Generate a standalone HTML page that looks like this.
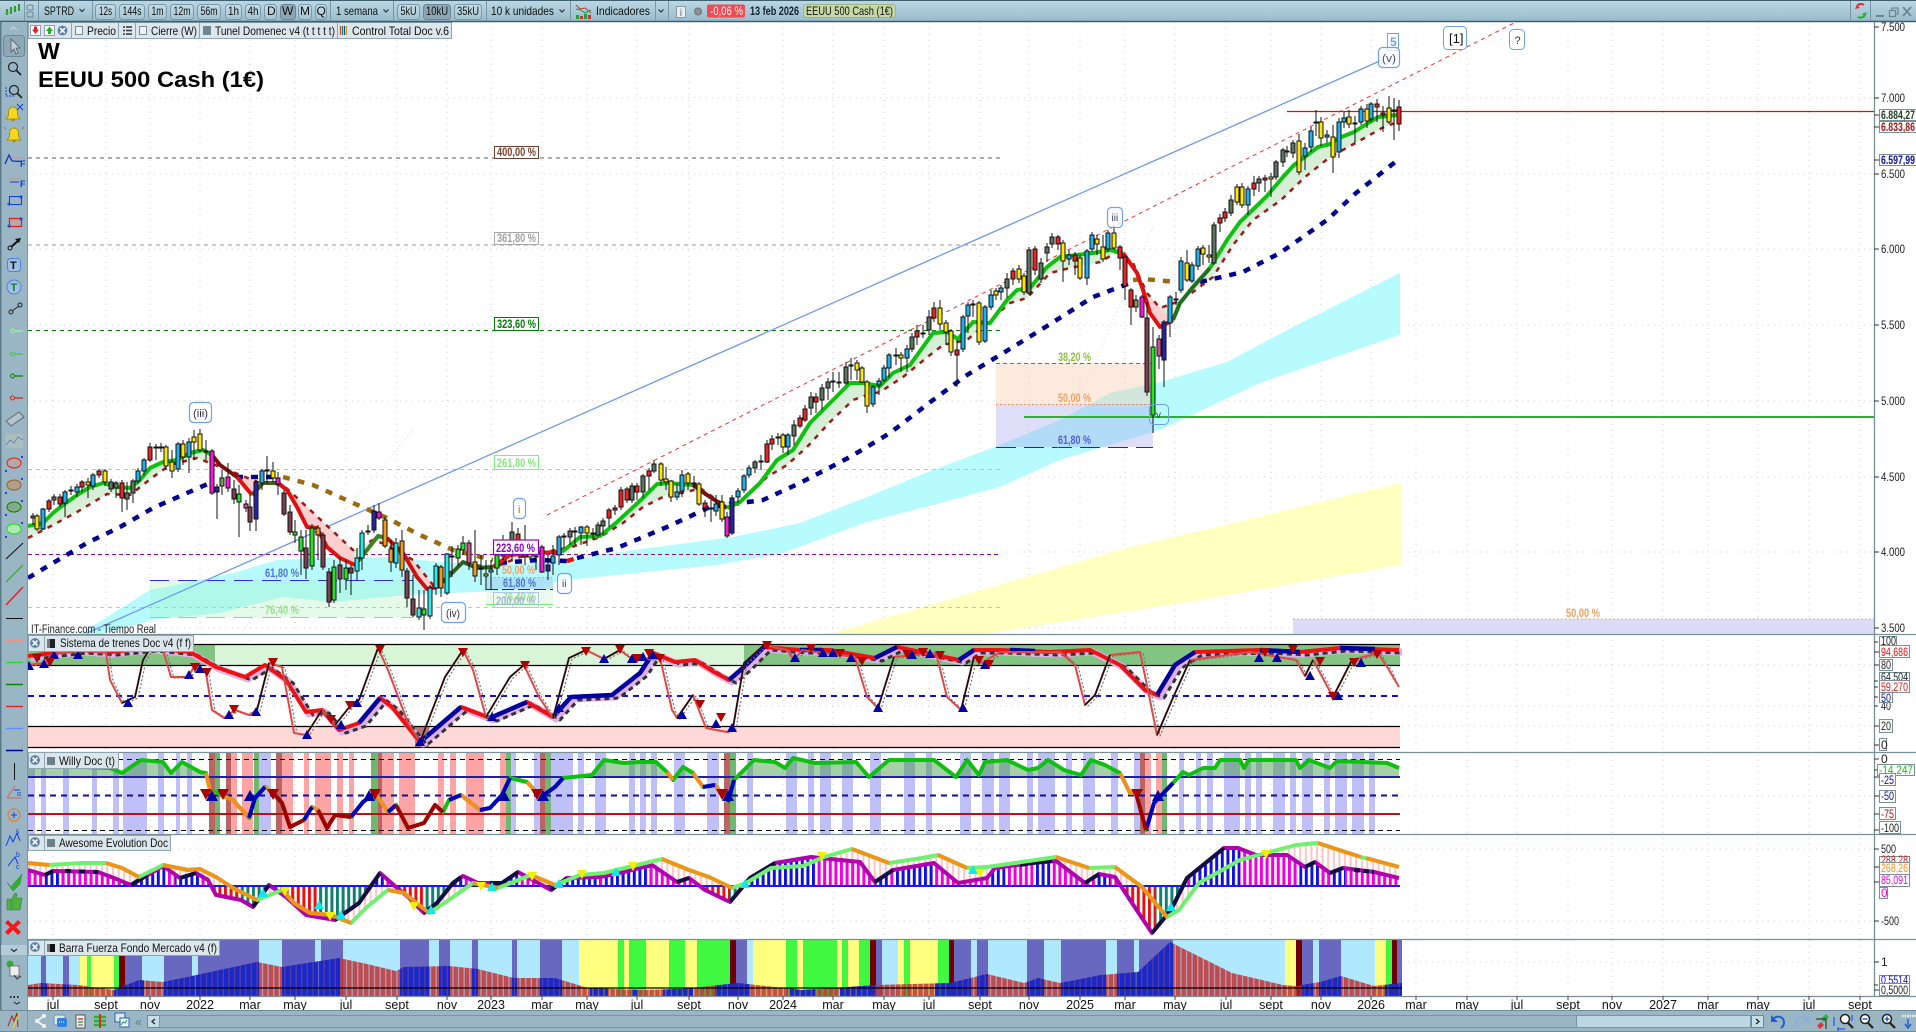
<!DOCTYPE html>
<html lang="es"><head><meta charset="utf-8"><title>EEUU 500 Cash (1€)</title>
<style>
html,body{margin:0;padding:0;background:#fff;overflow:hidden}
svg{display:block}
text{font-family:"Liberation Sans",sans-serif;font-size:12px;fill:#111}
.ax{font-size:12px;fill:#222}
.mo{font-size:12.5px;fill:#111}
.pl{fill:none;stroke-linejoin:round;stroke-linecap:butt}
.c rect{width:4px;stroke:#111;stroke-width:1}
.y{fill:#ffe800}.b{fill:#1fb0ee}.r{fill:#ee2222}.g{fill:#5d7560}.l{fill:#22e622}.m{fill:#ff10e0}.n{fill:#2424a8}.w{fill:#7f3f50}.cy{fill:#20eef0}.o{fill:#f09a20}.p{fill:#d0508f}.v{fill:#78a050}
.btn{fill:url(#btn);stroke:#7b98a8}
.on{fill:#8ea6b4;stroke:#6b8696}
.wv{fill:#fff;fill-opacity:.75;stroke:#6f9ff5;stroke-width:1.2}
.fb{font-size:11.5px;font-weight:bold}
.hd{fill:#dbe7ec;stroke:#8fa5b0}
.vb{fill:#fff;stroke:#7a9098}
.d{stroke:#7a97a7}
</style></head><body>
<svg xmlns="http://www.w3.org/2000/svg" width="1916" height="1032" viewBox="0 0 1916 1032">
<defs>
<linearGradient id="tb" x1="0" y1="0" x2="0" y2="1"><stop offset="0" stop-color="#bcd8e4"/><stop offset="1" stop-color="#98bbca"/></linearGradient>
<linearGradient id="btn" x1="0" y1="0" x2="0" y2="1"><stop offset="0" stop-color="#c5dee8"/><stop offset="1" stop-color="#a3c3d1"/></linearGradient>
<clipPath id="mc"><rect x="28" y="22" width="1846" height="612"/></clipPath>
<clipPath id="p3"><rect x="28" y="752" width="1846" height="82"/></clipPath>
<clipPath id="ga"><rect x="28" y="752" width="1400" height="25"/></clipPath>
<clipPath id="os"><polygon points="28,870 45,875 53,871 98,872 114,878 131,885 163,866 180,878 196,873 208,880 216,895 241,900 253,907 269,885 286,897 306,915 335,920 359,903 380,873 396,887 408,897 424,913 437,903 453,883 463,876 478,883 502,883 518,872 551,890 567,878 600,877 624,872 652,865 677,882 689,878 705,890 730,902 750,878 775,863 811,857 860,862 875,882 893,870 934,863 958,883 987,878 995,868 1032,863 1056,861 1085,883 1099,874 1115,877 1130,900 1152,933 1171,910 1187,878 1224,848 1238,848 1256,855 1287,855 1305,867 1315,862 1330,873 1343,868 1374,872 1399,878 1399,886 28,886"/></clipPath>
<clipPath id="sg"><polygon points="28,863 49,865 82,863 106,863 122,868 139,877 163,865 188,870 200,869 216,877 233,888 257,900 282,890 294,903 310,913 331,915 351,923 367,907 388,890 404,893 429,913 449,900 473,883 498,888 531,875 555,885 580,875 604,873 633,866 662,859 689,870 709,877 732,888 746,883 771,868 803,866 824,857 852,849 889,863 922,858 938,855 967,868 987,867 1015,863 1056,857 1089,868 1115,867 1142,887 1167,917 1179,910 1199,883 1240,860 1266,853 1296,845 1318,843 1339,850 1361,857 1399,867 1399,886 28,886"/></clipPath>
<clipPath id="br"><polygon points="28,985 41,983 78,985 114,990 139,980 163,982 192,976 229,968 257,962 282,967 339,958 367,964 396,971 404,967 449,966 478,969 514,978 555,978 588,988 640,990 681,989 738,983 803,990 877,985 950,983 987,974 1024,983 1038,978 1060,983 1101,975 1138,972 1170,942 1232,973 1283,985 1296,986 1320,982 1341,976 1374,986 1402,983 1402,996 28,996"/></clipPath>
<pattern id="sm" width="5.6" height="10" patternUnits="userSpaceOnUse"><rect width="3" height="10" fill="#f000e0"/></pattern>
<pattern id="sb" width="5.6" height="10" patternUnits="userSpaceOnUse"><rect width="3" height="10" fill="#1010e0"/></pattern>
<pattern id="sr" width="5.6" height="10" patternUnits="userSpaceOnUse"><rect width="3" height="10" fill="#e81010"/></pattern>
<pattern id="st" width="5.6" height="10" patternUnits="userSpaceOnUse"><rect width="3" height="10" fill="#108070"/></pattern>
<pattern id="sp" width="5.6" height="10" patternUnits="userSpaceOnUse"><rect width="2" height="10" fill="#ffc4c4"/></pattern>
<pattern id="br1" width="5.6" height="10" patternUnits="userSpaceOnUse"><rect width="4.4" height="10" fill="#c03034" fill-opacity=".85"/><rect x="4.4" width="1.2" height="10" fill="#c03034" fill-opacity=".4"/></pattern>
<pattern id="bb1" width="5.6" height="10" patternUnits="userSpaceOnUse"><rect width="4.4" height="10" fill="#1a28c8"/><rect x="4.4" width="1.2" height="10" fill="#1a28c8" fill-opacity=".5"/></pattern>
<marker id="tu" markerUnits="userSpaceOnUse" markerWidth="12" markerHeight="12" refX="5" refY="5" overflow="visible"><path d="M0 9h10l-5-9z" fill="#0000a8"/></marker>
<marker id="td" markerUnits="userSpaceOnUse" markerWidth="12" markerHeight="12" refX="5" refY="5" overflow="visible"><path d="M0 0h10l-5 9z" fill="#b00000"/></marker>
<marker id="Tu" markerUnits="userSpaceOnUse" markerWidth="14" markerHeight="14" refX="6" refY="6" overflow="visible"><path d="M0 11h12l-6-11z" fill="#0000a8"/></marker>
<marker id="Td" markerUnits="userSpaceOnUse" markerWidth="14" markerHeight="14" refX="6" refY="6" overflow="visible"><path d="M0 0h12l-6 11z" fill="#a80000"/></marker>
<marker id="cu" markerUnits="userSpaceOnUse" markerWidth="12" markerHeight="12" refX="5" refY="5" overflow="visible"><path d="M0 9h10l-5-9z" fill="#10e8f0"/></marker>
<marker id="yd" markerUnits="userSpaceOnUse" markerWidth="12" markerHeight="12" refX="5" refY="5" overflow="visible"><path d="M0 0h10l-5 9z" fill="#f0f000"/></marker>
<g id="xc"><circle r="5.4" fill="#5f80ab" stroke="#d8e4ea"/><path d="M-2.4-2.4L2.4 2.4M2.4-2.4L-2.4 2.4" stroke="#fff" stroke-width="1.6"/></g>
<g id="bell"><path d="M-7 6h14l-2.500-3.500v-4a4.500 4.500 0 0 0-9 0v4z" fill="#f4d820" stroke="#a88c10"/><circle cy="7" r="1.500" fill="#a88c10"/></g>
<g id="ell"><path d="M-9 8h2M-8 7v2M7-6h2M8-7v2" stroke="#1030e0" stroke-width="1.300"/></g>
</defs>

<!-- chart background -->
<rect width="1916" height="1032" fill="#fff"/>

<!-- dotted grid -->
<path d="M53 22V996M106 22V996M150 22V996M200 22V996M250 22V996M295 22V996M346 22V996M397 22V996M447 22V996M491 22V996M542 22V996M587 22V996M637 22V996M689 22V996M738 22V996M783 22V996M833 22V996M884 22V996M929 22V996M980 22V996M1029 22V996M1080 22V996M1125 22V996M1175 22V996M1226 22V996M1271 22V996M1321 22V996M1371 22V996M1416 22V996M1467 22V996M1517 22V996M1568 22V996M1612 22V996M1663 22V996M1708 22V996M1758 22V996M1809 22V996M1860 22V996" stroke="#d2d2d2" stroke-dasharray="1 5" fill="none"/>
<path d="M28 98H1874M28 174H1874M28 249H1874M28 325H1874M28 401H1874M28 477H1874M28 552H1874M28 628H1874M28 665H1874M28 706H1874M28 726H1874M28 796H1874M28 849H1874M28 921H1874M28 962H1874" stroke="#d2d2d2" stroke-dasharray="1 5" fill="none"/>

<g clip-path="url(#mc)">
<!-- yellow band -->
<polygon points="830,634 1120,550 1401,483 1401,565 1200,600 985,634" fill="#ffffbf"/>
<!-- cyan band -->
<polygon points="80,634 150,590 200,580 233,573 277,560 320,558 387,557 453,563 500,565 567,560 633,550 733,537 800,523 867,497 933,470 1000,445 1060,420 1110,393 1157,383 1227,362 1293,327 1400,273 1400,335 1260,383 1160,430 1060,460 1000,487 933,505 867,522 783,553 717,565 567,580 520,590 407,595 333,602 283,597 220,613 153,620 103,634" fill="#b8fbff"/>
<!-- fib left box -->
<rect x="150" y="580" width="263" height="37" fill="#9ff0b0" fill-opacity=".28"/>
<rect x="486" y="577" width="67" height="27" fill="#c8f4c8" fill-opacity=".35"/>
<rect x="486" y="578" width="67" height="11" fill="#a8dcf8" fill-opacity=".8"/>
<!-- fib right box -->
<rect x="996" y="363" width="157" height="41" fill="#fac8a8" fill-opacity=".38"/>
<rect x="996" y="404" width="157" height="43" fill="#a8a8ec" fill-opacity=".38"/>
<rect x="1293" y="619" width="581" height="15" fill="#dcdcf8"/>
<path d="M1293 619H1874" stroke="#f09060" stroke-dasharray="1.500 2.500"/>

<!-- fib horizontal levels -->
<path d="M28 158H1000" stroke="#5a5a5a" stroke-dasharray="4 4"/>
<path d="M28 245H1000" stroke="#9a9a9a" stroke-dasharray="4 4"/>
<path d="M28 330.500H1000" stroke="#008000" stroke-dasharray="4 4"/>
<path d="M28 469.500H1000" stroke="#80ee80" stroke-dasharray="4 4"/>
<path d="M28 554.500H1000" stroke="#9000c0" stroke-dasharray="4 3"/>
<path d="M28 607.500H1000" stroke="#b0c4f4" stroke-dasharray="4 4"/>
<path d="M150 580.500H413" stroke="#3030e0" stroke-dasharray="19 9"/>
<path d="M150 617.500H413" stroke="#70f070" stroke-dasharray="19 9"/>
<path d="M486 589.500H553" stroke="#2020c0" stroke-dasharray="12 4"/>
<path d="M486 604.500H553" stroke="#70f070"/>
<path d="M486 577.500H553" stroke="#f08040" stroke-dasharray="1.500 2.500"/>
<path d="M996 363.500H1153" stroke="#30a030" stroke-dasharray="4 3"/>
<path d="M996 404.500H1153" stroke="#f08040" stroke-dasharray="1.500 2.500"/>
<path d="M996 447.500H1153" stroke="#2020e0" stroke-dasharray="20 8"/>

<!-- faint dotted diagonals -->
<path d="M413 430L235 640M1153 227L1053 460" stroke="#dadada" stroke-dasharray="1 3" fill="none"/>

<!-- long trend lines -->
<path d="M87 633L1382 60" stroke="#7098f0" stroke-width="1.300" fill="none"/>
<path d="M547 515L1514 23" stroke="#f03030" stroke-dasharray="4 4" fill="none"/>
<path d="M1287 111.500H1874" stroke="#e01010" stroke-width="1.300"/>
<path d="M1024 417H1874" stroke="#30b030" stroke-width="2"/>

<!-- tunnel fills -->
<polygon fill="#d7eed7" points="28,526 43,523 53,513 63,505 77,495 90,487 103,483 117,487 130,488 140,480 150,468 163,462 177,460 190,453 203,450 212,455 220,465 237,477 252,495 263,483 278,483 287,490 297,507 307,527 317,528 327,547 340,558 355,565 367,550 378,536 387,538 403,553 417,577 427,589 437,587 450,575 463,562 477,568 493,567 510,555 530,553 562,552 580,537 600,536 617,522 643,498 657,484 667,483 693,485 707,495 727,508 740,502 760,483 777,460 793,450 810,423 830,403 850,383 863,383 880,386 893,373 910,365 933,333 947,332 958,339 973,322 990,323 1007,300 1017,290 1030,288 1047,267 1060,257 1093,253 1110,250 1123,253 1137,273 1143,290 1150,313 1160,327 1173,320 1180,303 1193,287 1210,268 1227,240 1240,222 1266,197 1283,177 1294,165 1318,147 1330,144 1339,138 1354,132 1365,125 1378,117 1397,115 1395,123 1382,128 1361,140 1330,157 1305,177 1281,200 1253,220 1233,245 1213,277 1193,292 1177,302 1160,308 1147,293 1133,263 1117,252 1100,262 1070,268 1050,273 1027,298 1010,303 987,323 967,340 943,345 930,355 903,377 880,392 867,395 853,400 830,422 807,447 787,465 767,477 740,503 720,502 700,488 687,492 667,495 643,507 623,523 600,537 572,547 545,552 520,557 493,568 463,563 433,585 413,560 387,545 373,540 353,550 323,522 307,507 283,485 260,483 233,472 210,463 197,458 170,465 153,477 130,495 107,494 77,512 53,525 28,538"/>
<polygon fill="#ffcfcf" points="220,465 237,477 252,495 260,483 233,472"/>
<polygon fill="#ffcfcf" points="287,490 297,507 307,527 317,528 327,547 340,558 355,565 353,550 323,522 307,507 283,485"/>
<polygon fill="#ffcfcf" points="403,553 417,577 427,589 433,585 413,560"/>
<polygon fill="#ffcfcf" points="1137,273 1143,290 1150,313 1160,327 1173,320 1160,308 1147,293 1133,263"/>

<!-- navy/brown slow dashed -->
<polyline class="pl" stroke="#000090" stroke-width="4.500" stroke-dasharray="7 8" points="28,578 53,563 87,543 120,527 153,508 187,493 210,483"/>
<polyline class="pl" stroke="#9a6a10" stroke-width="4.500" stroke-dasharray="7 8" points="283,477 313,485 353,503 387,518 420,535 453,550 493,560"/>
<polyline class="pl" stroke="#000090" stroke-width="4.500" stroke-dasharray="7 8" points="236,477 280,477"/>
<polyline class="pl" stroke="#000090" stroke-width="4.500" stroke-dasharray="7 8" points="500,563 537,560 567,561"/>
<polyline class="pl" stroke="#e81010" stroke-width="4.500" stroke-dasharray="7 8" points="567,561 577,558"/>
<polyline class="pl" stroke="#000090" stroke-width="4.500" stroke-dasharray="7 8" points="577,558 617,548 667,527 710,507 763,500 800,483 850,457 890,433 933,400 967,375 1000,355 1047,326 1093,297 1133,282"/>
<polyline class="pl" stroke="#9a6a10" stroke-width="4.500" stroke-dasharray="7 8" points="1133,280 1143,279 1177,282"/>
<polyline class="pl" stroke="#000090" stroke-width="4.500" stroke-dasharray="7 8" points="1200,282 1243,272 1280,253 1327,220 1356,193 1399,159"/>
<!-- dark red dashed -->
<polyline class="pl" stroke="#a01818" stroke-width="2.500" stroke-dasharray="5 6" points="28,538 53,525 77,512 107,494 130,495 153,477 170,465 197,458 210,463 233,472 260,483 283,485 307,507 323,522 353,550 373,540 387,545 413,560 433,585 463,563 493,568 520,557 545,552 572,547 600,537 623,523 643,507 667,495 687,492 700,488 720,502 740,503 767,477 787,465 807,447 830,422 853,400 867,395 880,392 903,377 930,355 943,345 967,340 987,323 1010,303 1027,298 1050,273 1070,268 1100,262 1117,252 1133,263 1147,293 1160,308 1177,302 1193,292 1213,277 1233,245 1253,220 1281,200 1305,177 1330,157 1361,140 1382,128 1395,123"/>
<!-- center line -->
<polyline class="pl" stroke="#10c010" stroke-width="4" points="28,526 43,523 53,513 63,505 77,495 90,487 103,483 117,487 130,488 140,480 150,468 163,462 177,460 190,453 203,450 212,455"/>
<polyline class="pl" stroke="#7a1010" stroke-width="4" points="212,455 220,465 237,477"/>
<polyline class="pl" stroke="#e01010" stroke-width="4" points="237,477 252,495"/>
<polyline class="pl" stroke="#406020" stroke-width="4" points="252,495 263,483 278,483"/>
<polyline class="pl" stroke="#e01010" stroke-width="4" points="278,483 287,490 297,507 307,527 317,528 327,547 340,558 355,565"/>
<polyline class="pl" stroke="#408020" stroke-width="4" points="355,565 367,550 378,536 387,538"/>
<polyline class="pl" stroke="#d01010" stroke-width="4" points="387,538 403,553 417,577 427,589 437,587"/>
<polyline class="pl" stroke="#306020" stroke-width="4" points="437,587 450,575 463,562 477,568 493,567"/>
<polyline class="pl" stroke="#d02010" stroke-width="4" points="493,567 510,555 530,553 562,552"/>
<polyline class="pl" stroke="#10c010" stroke-width="4" points="562,552 580,537 600,536 617,522 643,498 657,484 667,483 693,485"/>
<polyline class="pl" stroke="#7a1010" stroke-width="4" points="693,485 707,495 727,508"/>
<polyline class="pl" stroke="#10c010" stroke-width="4" points="727,508 740,502 760,483 777,460 793,450 810,423 830,403 850,383 863,383 880,386 893,373 910,365 933,333 947,332 958,339 973,322 990,323 1007,300 1017,290 1030,288 1047,267 1060,257 1093,253 1110,250 1123,253"/>
<polyline class="pl" stroke="#e01010" stroke-width="4" points="1123,253 1137,273 1143,290 1150,313 1160,327 1173,320"/>
<polyline class="pl" stroke="#207020" stroke-width="4" points="1173,320 1180,303 1193,287 1210,268"/>
<polyline class="pl" stroke="#10c010" stroke-width="4" points="1210,268 1227,240 1240,222 1266,197 1283,177 1294,165 1318,147 1330,144 1339,138 1354,132 1365,125 1378,117 1397,115"/>

<!-- wicks -->
<path fill="none" stroke="#111" d="M33 513V525M37 514V531M43 508V530M49 499V512M54 494V505M60 494V507M65 490V517M71 486V495M77 484V497M82 480V492M88 478V498M93 473V490M99 469V478M105 469V486M111 479V492M116 481V498M122 480V512M127 482V510M133 479V503M138 468V484M144 458V475M150 443V462M156 444V460M161 443V452M166 445V470M172 450V478M178 442V472M183 440V465M189 438V473M194 430V460M200 429V452M206 440V460M212 449V495M217 484V519M222 470V495M228 463V492M234 480V504M239 485V537M246 500V512M250 495V531M256 480V531M262 469V490M267 456V484M273 462V482M278 472V495M284 490V516M290 505V535M295 520V543M301 530V575M306 530V579M312 524V570M318 525V560M323 532V570M329 568V607M334 560V603M340 558V593M346 560V590M351 565V595M357 548V581M362 530V570M368 525V535M374 505V533M379 503V520M385 517V548M391 540V572M396 538V568M402 530V577M407 568V607M413 575V617M419 590V620M424 590V630M430 585V619M436 563V595M441 565V597M447 553V595M452 546V577M458 545V566M463 536V555M469 540V570M475 530V582M481 555V585M486 560V590M491 560V590M497 540V575M503 535V560M512 522V560M518 528V553M525 525V565M530 548V560M536 550V570M542 545V573M548 555V580M553 545V575M559 535V565M564 533V548M570 528V545M575 527V545M581 526V545M587 525V546M593 528V540M598 522V537M603 518V535M609 508V527M615 505V515M621 487V510M627 487V503M632 483V503M637 483V500M643 474V498M649 468V490M654 460V473M661 462V486M666 467V490M671 480V502M677 483V500M682 470V497M688 472V490M694 476V488M699 482V506M705 500V517M711 500V522M716 495V516M722 495V522M727 512V538M732 495V535M738 488V503M744 474V493M749 465V478M755 460V473M761 455V470M767 440V463M772 435V450M778 433V445M783 433V453M788 433V455M794 420V445M800 415V428M805 405V422M811 392V415M816 393V413M822 384V410M828 378V400M833 372V392M839 372V388M846 362V385M851 358V380M857 360V380M862 366V383M867 380V413M873 385V407M879 378V395M884 365V382M889 353V378M896 348V365M901 352V372M907 345V372M912 333V352M917 325V345M923 325V338M929 310V335M934 302V322M940 300V330M946 320V345M951 329V356M957 340V387M963 315V352M968 302V333M973 300V317M979 301V345M985 305V343M991 290V310M996 288V300M1001 285V300M1007 273V298M1013 268V285M1019 265V283M1024 273V295M1029 247V295M1035 246V275M1041 258V283M1047 243V262M1052 233V248M1058 235V250M1063 240V282M1069 250V265M1075 252V275M1080 255V280M1087 249V285M1092 232V252M1097 235V255M1103 235V262M1108 230V252M1114 225V250M1120 245V270M1125 255V300M1131 288V325M1136 295V312M1142 295V318M1147 302V396M1153 327V433M1159 335V369M1164 320V387M1170 295V337M1176 292V305M1181 257V293M1187 250V282M1192 262V283M1198 246V270M1203 245V265M1209 245V263M1214 222V265M1220 214V232M1225 208V222M1231 195V216M1237 184V205M1242 183V208M1248 186V215M1254 176V196M1259 176V192M1265 175V192M1271 173V197M1276 160V180M1283 148V167M1287 146V157M1293 140V158M1299 134V175M1305 143V170M1311 127V152M1316 110V136M1321 117V146M1327 130V143M1333 125V173M1339 118V158M1344 112V128M1349 110V128M1355 116V143M1361 106V125M1367 104V128M1371 102V122M1377 99V122M1383 106V132M1389 96V124M1394 98V140M1399 100V131"/>

<!-- candle bodies -->
<g class="c">
<rect class="g" x="31" y="516" height="2"/><rect class="y" x="35" y="516" height="13"/><rect class="b" x="41" y="509" height="20"/><rect class="r" x="47" y="501" height="8"/><rect class="g" x="52" y="497" height="3"/><rect class="r" x="58" y="497" height="7"/><rect class="b" x="63" y="492" height="11"/><rect class="g" x="69" y="490" height="1"/><rect class="b" x="75" y="487" height="5"/><rect class="r" x="80" y="482" height="5"/><rect class="y" x="86" y="482" height="3"/><rect class="b" x="91" y="475" height="11"/><rect class="r" x="97" y="471" height="4"/><rect class="y" x="103" y="471" height="11"/><rect class="g" x="109" y="482" height="7"/><rect class="g" x="114" y="483" height="5"/><rect class="r" x="120" y="483" height="15"/><rect class="g" x="125" y="493" height="6"/><rect class="g" x="131" y="481" height="12"/><rect class="b" x="136" y="471" height="10"/><rect class="b" x="142" y="460" height="11"/><rect class="r" x="148" y="447" height="13"/><rect class="g" x="154" y="447" height="1"/><rect class="g" x="159" y="447" height="1"/><rect class="y" x="164" y="447" height="19"/><rect class="y" x="170" y="462" height="9"/><rect class="b" x="176" y="444" height="25"/><rect class="y" x="181" y="444" height="13"/><rect class="b" x="187" y="442" height="15"/><rect class="y" x="192" y="437" height="5"/><rect class="y" x="198" y="434" height="16"/><rect class="g" x="204" y="451" height="1"/><rect class="m" x="210" y="451" height="42"/><rect class="n" x="215" y="487" height="5"/><rect class="v" x="220" y="478" height="8"/><rect class="m" x="226" y="477" height="11"/><rect class="w" x="232" y="489" height="10"/><rect class="l" x="237" y="494" height="8"/><rect class="p" x="244" y="504" height="4"/><rect class="w" x="248" y="507" height="15"/><rect class="n" x="254" y="482" height="37"/><rect class="b" x="260" y="471" height="12"/><rect class="g" x="265" y="470" height="1"/><rect class="y" x="271" y="471" height="7"/><rect class="m" x="276" y="478" height="6"/><rect class="w" x="282" y="493" height="21"/><rect class="w" x="288" y="512" height="20"/><rect class="l" x="293" y="532" height="3"/><rect class="l" x="299" y="537" height="14"/><rect class="w" x="304" y="548" height="20"/><rect class="l" x="310" y="528" height="38"/><rect class="o" x="316" y="528" height="7"/><rect class="w" x="321" y="535" height="32"/><rect class="w" x="327" y="572" height="30"/><rect class="l" x="332" y="567" height="33"/><rect class="w" x="338" y="565" height="14"/><rect class="l" x="344" y="568" height="11"/><rect class="w" x="349" y="568" height="5"/><rect class="cy" x="355" y="558" height="13"/><rect class="cy" x="360" y="533" height="25"/><rect class="g" x="366" y="531" height="1"/><rect class="n" x="372" y="511" height="19"/><rect class="m" x="377" y="512" height="6"/><rect class="o" x="383" y="520" height="26"/><rect class="o" x="389" y="549" height="13"/><rect class="cy" x="394" y="543" height="20"/><rect class="o" x="400" y="541" height="29"/><rect class="w" x="405" y="571" height="27"/><rect class="w" x="411" y="599" height="16"/><rect class="cy" x="417" y="608" height="9"/><rect class="l" x="422" y="609" height="6"/><rect class="cy" x="428" y="588" height="28"/><rect class="cy" x="434" y="566" height="22"/><rect class="o" x="439" y="567" height="21"/><rect class="cy" x="445" y="554" height="39"/><rect class="g" x="450" y="556" height="1"/><rect class="l" x="456" y="549" height="9"/><rect class="l" x="461" y="543" height="7"/><rect class="p" x="467" y="543" height="20"/><rect class="o" x="473" y="562" height="14"/><rect class="g" x="479" y="568" height="1"/><rect class="y" x="484" y="574" height="2"/><rect class="cy" x="489" y="570" height="2"/><rect class="l" x="495" y="555" height="13"/><rect class="p" x="501" y="547" height="9"/><rect class="g" x="510" y="532" height="8"/><rect class="r" x="516" y="534" height="6"/><rect class="r" x="523" y="540" height="17"/><rect class="y" x="528" y="553" height="4"/><rect class="g" x="534" y="556" height="1"/><rect class="m" x="540" y="547" height="25"/><rect class="n" x="546" y="565" height="6"/><rect class="b" x="551" y="556" height="7"/><rect class="b" x="557" y="537" height="18"/><rect class="g" x="562" y="536" height="1"/><rect class="g" x="568" y="531" height="6"/><rect class="r" x="573" y="531" height="1"/><rect class="b" x="579" y="527" height="6"/><rect class="y" x="585" y="527" height="6"/><rect class="y" x="591" y="533" height="1"/><rect class="g" x="596" y="525" height="10"/><rect class="g" x="601" y="521" height="5"/><rect class="r" x="607" y="510" height="8"/><rect class="r" x="613" y="508" height="2"/><rect class="r" x="619" y="490" height="17"/><rect class="r" x="625" y="489" height="11"/><rect class="g" x="630" y="486" height="14"/><rect class="r" x="635" y="486" height="6"/><rect class="g" x="641" y="476" height="16"/><rect class="r" x="647" y="471" height="5"/><rect class="g" x="652" y="464" height="7"/><rect class="y" x="659" y="464" height="16"/><rect class="y" x="664" y="479" height="3"/><rect class="y" x="669" y="481" height="16"/><rect class="b" x="675" y="492" height="5"/><rect class="b" x="680" y="475" height="16"/><rect class="y" x="686" y="474" height="9"/><rect class="g" x="692" y="483" height="1"/><rect class="y" x="697" y="484" height="20"/><rect class="r" x="703" y="503" height="5"/><rect class="g" x="709" y="508" height="1"/><rect class="b" x="714" y="504" height="7"/><rect class="y" x="720" y="502" height="17"/><rect class="m" x="725" y="517" height="19"/><rect class="n" x="730" y="498" height="35"/><rect class="b" x="736" y="491" height="6"/><rect class="b" x="742" y="476" height="14"/><rect class="b" x="747" y="468" height="7"/><rect class="g" x="753" y="462" height="6"/><rect class="g" x="759" y="461" height="1"/><rect class="r" x="765" y="444" height="18"/><rect class="r" x="770" y="439" height="5"/><rect class="r" x="776" y="437" height="1"/><rect class="y" x="781" y="435" height="12"/><rect class="b" x="786" y="435" height="12"/><rect class="g" x="792" y="425" height="11"/><rect class="r" x="798" y="418" height="8"/><rect class="r" x="803" y="409" height="11"/><rect class="g" x="809" y="397" height="11"/><rect class="r" x="814" y="397" height="5"/><rect class="g" x="820" y="388" height="12"/><rect class="g" x="826" y="382" height="6"/><rect class="r" x="831" y="381" height="1"/><rect class="g" x="837" y="382" height="1"/><rect class="g" x="844" y="367" height="16"/><rect class="g" x="849" y="365" height="1"/><rect class="y" x="855" y="363" height="7"/><rect class="y" x="860" y="368" height="14"/><rect class="y" x="865" y="382" height="24"/><rect class="b" x="871" y="387" height="17"/><rect class="b" x="877" y="381" height="4"/><rect class="b" x="882" y="368" height="12"/><rect class="b" x="887" y="355" height="13"/><rect class="g" x="894" y="355" height="1"/><rect class="y" x="899" y="355" height="3"/><rect class="b" x="905" y="349" height="9"/><rect class="g" x="910" y="337" height="12"/><rect class="r" x="915" y="331" height="6"/><rect class="g" x="921" y="333" height="1"/><rect class="g" x="927" y="317" height="13"/><rect class="r" x="932" y="308" height="10"/><rect class="y" x="938" y="308" height="16"/><rect class="y" x="944" y="323" height="9"/><rect class="y" x="949" y="331" height="21"/><rect class="r" x="955" y="350" height="5"/><rect class="b" x="961" y="317" height="32"/><rect class="b" x="966" y="305" height="11"/><rect class="y" x="971" y="304" height="1"/><rect class="y" x="977" y="303" height="39"/><rect class="b" x="983" y="307" height="34"/><rect class="b" x="989" y="295" height="12"/><rect class="y" x="994" y="291" height="4"/><rect class="b" x="999" y="288" height="4"/><rect class="g" x="1005" y="279" height="9"/><rect class="r" x="1011" y="271" height="8"/><rect class="y" x="1017" y="269" height="10"/><rect class="y" x="1022" y="276" height="16"/><rect class="g" x="1027" y="250" height="43"/><rect class="r" x="1033" y="249" height="21"/><rect class="g" x="1039" y="263" height="16"/><rect class="g" x="1045" y="247" height="6"/><rect class="g" x="1050" y="237" height="7"/><rect class="r" x="1056" y="237" height="7"/><rect class="y" x="1061" y="243" height="18"/><rect class="b" x="1067" y="255" height="4"/><rect class="r" x="1073" y="255" height="6"/><rect class="y" x="1078" y="258" height="20"/><rect class="b" x="1085" y="251" height="27"/><rect class="b" x="1090" y="235" height="14"/><rect class="y" x="1095" y="239" height="5"/><rect class="y" x="1101" y="247" height="12"/><rect class="b" x="1106" y="233" height="16"/><rect class="y" x="1112" y="233" height="15"/><rect class="r" x="1118" y="247" height="11"/><rect class="r" x="1123" y="257" height="29"/><rect class="r" x="1129" y="290" height="17"/><rect class="v" x="1134" y="300" height="7"/><rect class="m" x="1140" y="297" height="20"/><rect class="w" x="1145" y="318" height="74"/><rect class="l" x="1151" y="347" height="68"/><rect class="p" x="1157" y="339" height="17"/><rect class="n" x="1162" y="322" height="38"/><rect class="b" x="1168" y="297" height="26"/><rect class="y" x="1174" y="299" height="1"/><rect class="b" x="1179" y="261" height="29"/><rect class="y" x="1185" y="263" height="17"/><rect class="b" x="1190" y="265" height="16"/><rect class="b" x="1196" y="249" height="17"/><rect class="y" x="1201" y="248" height="6"/><rect class="y" x="1207" y="255" height="2"/><rect class="g" x="1212" y="225" height="38"/><rect class="r" x="1218" y="218" height="5"/><rect class="r" x="1223" y="212" height="6"/><rect class="g" x="1229" y="200" height="13"/><rect class="y" x="1235" y="187" height="15"/><rect class="y" x="1240" y="187" height="18"/><rect class="b" x="1246" y="189" height="16"/><rect class="r" x="1252" y="183" height="6"/><rect class="g" x="1257" y="179" height="4"/><rect class="r" x="1263" y="178" height="2"/><rect class="y" x="1269" y="177" height="2"/><rect class="g" x="1274" y="162" height="15"/><rect class="g" x="1281" y="150" height="12"/><rect class="r" x="1285" y="151" height="1"/><rect class="g" x="1291" y="143" height="10"/><rect class="y" x="1297" y="141" height="31"/><rect class="b" x="1303" y="148" height="8"/><rect class="b" x="1309" y="131" height="16"/><rect class="r" x="1314" y="122" height="1"/><rect class="y" x="1319" y="122" height="16"/><rect class="b" x="1325" y="135" height="2"/><rect class="y" x="1331" y="137" height="20"/><rect class="b" x="1337" y="122" height="30"/><rect class="b" x="1342" y="118" height="4"/><rect class="y" x="1347" y="117" height="7"/><rect class="g" x="1353" y="123" height="1"/><rect class="b" x="1359" y="109" height="13"/><rect class="y" x="1365" y="109" height="12"/><rect class="b" x="1369" y="104" height="15"/><rect class="r" x="1375" y="104" height="3"/><rect class="r" x="1381" y="113" height="2"/><rect class="y" x="1387" y="108" height="14"/><rect class="g" x="1392" y="110" height="1"/><rect class="r" x="1397" y="107" height="17"/>
</g>

<!-- fib labels -->
<rect x="494.500" y="146.500" width="44" height="12" fill="#fff" stroke="#704030"/><text x="497" y="156" textLength="39" lengthAdjust="spacingAndGlyphs" class="fb" style="fill:#804030">400,00 %</text>
<rect x="494.500" y="232.500" width="44" height="12" fill="#fff" stroke="#a8a8a8"/><text x="497" y="242" textLength="39" lengthAdjust="spacingAndGlyphs" class="fb" style="fill:#a0a0a0">361,80 %</text>
<rect x="494.500" y="317.500" width="44" height="13" fill="#fff" stroke="#008000"/><text x="497" y="328" textLength="39" lengthAdjust="spacingAndGlyphs" class="fb" style="fill:#008000">323,60 %</text>
<rect x="494.500" y="455.500" width="44" height="14" fill="#fff" stroke="#80ee80"/><text x="497" y="467" textLength="39" lengthAdjust="spacingAndGlyphs" class="fb" style="fill:#80e880">261,80 %</text>
<rect x="493.500" y="540" width="45" height="14.500" fill="#fff" stroke="#9000c0" stroke-width="1.200"/><text x="496" y="552" textLength="39" lengthAdjust="spacingAndGlyphs" class="fb" style="fill:#9000c0">223,60 %</text>
<text x="502" y="574" textLength="33" lengthAdjust="spacingAndGlyphs" class="fb" style="fill:#f0a060">50,00 %</text>
<text x="503" y="587" textLength="33" lengthAdjust="spacingAndGlyphs" class="fb" style="fill:#5070d8">61,80 %</text>
<rect x="493.500" y="592.500" width="45" height="15" fill="none" stroke="#b0c4f4"/>
<text x="503" y="601" textLength="33" lengthAdjust="spacingAndGlyphs" class="fb" style="fill:#98e090">76,40 %</text>
<text x="496" y="605" textLength="39" lengthAdjust="spacingAndGlyphs" class="fb" style="fill:#a8b0dc">200,00 %</text>
<text x="265" y="577" textLength="34" lengthAdjust="spacingAndGlyphs" class="fb" style="fill:#5070d8">61,80 %</text>
<text x="265" y="614" textLength="34" lengthAdjust="spacingAndGlyphs" class="fb" style="fill:#98e090">76,40 %</text>
<text x="1058" y="361" textLength="33" lengthAdjust="spacingAndGlyphs" class="fb" style="fill:#90c040">38,20 %</text>
<text x="1058" y="402" textLength="33" lengthAdjust="spacingAndGlyphs" class="fb" style="fill:#f0a060">50,00 %</text>
<text x="1058" y="444" textLength="33" lengthAdjust="spacingAndGlyphs" class="fb" style="fill:#5060d0">61,80 %</text>
<text x="1566" y="617" textLength="34" lengthAdjust="spacingAndGlyphs" class="fb" style="fill:#f0a060">50,00 %</text>

<!-- wave labels -->
<rect class="wv" x="189.500" y="402.500" width="22" height="20" rx="4"/><text x="193" y="417" textLength="15" lengthAdjust="spacingAndGlyphs" style="fill:#334;font-size:11px">(iii)</text>
<rect class="wv" x="441.500" y="602.500" width="24" height="20" rx="4"/><text x="446" y="617" textLength="14" lengthAdjust="spacingAndGlyphs" style="fill:#334;font-size:11px">(iv)</text>
<rect class="wv" x="513.500" y="498.500" width="12" height="20" rx="4"/><text x="518" y="513" style="fill:#c07010;font-size:11px">i</text>
<rect class="wv" x="557.500" y="573.500" width="14" height="20" rx="4"/><text x="562" y="587" style="fill:#304060;font-size:10px">ii</text>
<rect class="wv" x="1107.500" y="207.500" width="15" height="20" rx="4"/><text x="1111.500" y="221" style="fill:#304060;font-size:10px">iii</text>
<rect x="1149.500" y="404.500" width="19" height="20" rx="4" fill="none" stroke="#6f9ff5"/><text x="1156" y="418" style="fill:#304060;font-size:10px">v</text>
<rect x="1387.500" y="33.500" width="11" height="17" fill="none" stroke="#6f9ff5"/><text x="1390" y="46" style="fill:#6f9ff5;font-size:12px;font-weight:bold">5</text>
<rect class="wv" x="1378.500" y="47.500" width="21" height="20" rx="4"/><text x="1382" y="62" textLength="14" lengthAdjust="spacingAndGlyphs" style="fill:#405070;font-size:11px">(v)</text>
<rect x="1443.500" y="26.500" width="23" height="23" rx="4" fill="#fff" stroke="#6f9ff5"/><text x="1449" y="43" style="fill:#111;font-size:13px">[1]</text>
<rect x="1509.500" y="29.500" width="15" height="20" rx="4" fill="#fff" stroke="#6f9ff5"/><text x="1514.500" y="44" style="fill:#334;font-size:11px">?</text>

<text x="38" y="59" style="font-size:23px;font-weight:bold;fill:#000">W</text>
<text x="38" y="87" textLength="226" lengthAdjust="spacingAndGlyphs" style="font-size:22px;font-weight:bold;fill:#000">EEUU 500 Cash (1€)</text>
<text x="31" y="633" textLength="125" lengthAdjust="spacingAndGlyphs" style="font-size:11.500px;fill:#222">IT-Finance.com - Tiempo Real</text>
</g>

<!-- PANEL 2 -->
<rect x="28" y="644" width="1372" height="21" fill="#d8f5d8"/>
<rect x="28" y="644" width="187" height="21" fill="#82c482"/>
<rect x="744" y="644" width="656" height="21" fill="#82c482"/>
<rect x="28" y="726" width="1372" height="21" fill="#ffd8d8"/>
<rect x="415" y="726" width="14" height="21" fill="#b87878"/>
<path d="M28 644.500H1400M28 665.500H1400M28 726.500H1400M28 747.500H1400" stroke="#000" stroke-width="1.200"/>
<path d="M28 696H1400" stroke="#1010d0" stroke-width="2" stroke-dasharray="6 5"/>
<polyline class="pl" stroke="#e0b0e8" stroke-width="7" transform="translate(3 2)" points="28,656 80,650 110,652 150,648 190,652 216,667 245,677 265,665 286,680 306,712 322,710 339,730 359,723 380,698 392,707 420,742 461,707 490,718 527,702 553,717 571,697 612,695 640,673 653,653 675,662 695,660 714,672 729,680 744,667 764,647 800,650 830,650 875,658 897,647 959,660 974,650 1000,650 1050,652 1090,650 1120,665 1145,690 1157,695 1175,665 1195,652 1260,650 1300,652 1340,648 1399,650"/>
<polyline class="pl" stroke="#333" stroke-width="3" stroke-dasharray="5 4" transform="translate(7 3)" points="28,656 80,650 110,652 150,648 190,652 216,667 245,677 265,665 286,680 306,712 322,710 339,730 359,723 380,698 392,707 420,742 461,707 490,718 527,702 553,717 571,697 612,695 640,673 653,653 675,662 695,660 714,672 729,680 744,667 764,647 800,650 830,650 875,658 897,647 959,660 974,650 1000,650 1050,652 1090,650 1120,665 1145,690 1157,695 1175,665 1195,652 1260,650 1300,652 1340,648 1393,650"/>
<polyline class="pl" stroke="#f01010" stroke-width="4" points="28,656 80,650 110,652 150,648 190,652 216,667 245,677 265,665 286,680 306,712 322,710 339,730 359,723 380,698 392,707 420,742 461,707 490,718 527,702 553,717 571,697 612,695 640,673 653,653 675,662 695,660 714,672 729,680 744,667 764,647 800,650 830,650 875,658 897,647 959,660 974,650 1000,650 1050,652 1090,650 1120,665 1145,690 1157,695 1175,665 1195,652 1260,650 1300,652 1340,648 1399,650"/>
<g fill="none" stroke="#0000a0" stroke-width="4.500" stroke-linejoin="round">
<polyline points="359,723 380,698"/><polyline points="420,742 461,707"/><polyline points="490,718 527,702"/><polyline points="553,717 571,697 612,695 640,673 653,653"/><polyline points="729,680 744,667 764,647"/><polyline points="800,650 822,650"/><polyline points="875,658 897,647"/><polyline points="959,660 974,650"/><polyline points="1010,650 1035,651"/><polyline points="1157,695 1175,665 1195,652"/><polyline points="1260,650 1300,652"/><polyline points="1340,648 1375,649"/>
</g>
<polyline class="pl" stroke="#777" stroke-width="1.200" stroke-dasharray="2 2" transform="translate(3 1)" points="28,665 45,663 53,653 82,650 106,653 110,680 122,703 135,697 143,660 151,647 163,650 171,677 188,677 194,667 206,673 212,710 224,718 235,710 249,715 257,710 269,663 282,667 294,733 306,735 322,710 335,725 351,705 359,700 378,648 388,670 408,723 420,742 445,677 463,650 473,670 486,717 510,677 524,665 539,697 553,718 569,658 586,650 604,659 620,650 633,660 660,658 672,710 677,718 693,695 706,728 727,732 733,728 744,663 764,645 787,650 794,660 802,650 855,657 867,697 878,708 894,657 936,653 947,697 961,710 974,657 982,663 1000,652 1060,652 1075,665 1085,705 1095,695 1110,655 1140,652 1150,700 1157,735 1172,700 1190,660 1250,652 1296,660 1305,676 1313,660 1333,697 1352,660 1378,653 1389,670 1396,687"/>
<polyline class="pl" stroke="#e04848" stroke-width="2" points="28,665 45,663 53,653 82,650 106,653 110,680 122,703 135,697 143,660 151,647 163,650 171,677 188,677 194,667 206,673 212,710 224,718 235,710 249,715 257,710 269,663 282,667 294,733 306,735 322,710 335,725 351,705 359,700 378,648 388,670 408,723 420,742 445,677 463,650 473,670 486,717 510,677 524,665 539,697 553,718 569,658 586,650 604,659 620,650 633,660 660,658 672,710 677,718 693,695 706,728 727,732 733,728 744,663 764,645 787,650 794,660 802,650 855,657 867,697 878,708 894,657 936,653 947,697 961,710 974,657 982,663 1000,652 1060,652 1075,665 1085,705 1095,695 1110,655 1140,652 1150,700 1157,735 1172,700 1190,660 1250,652 1296,660 1305,676 1313,660 1333,697 1352,660 1378,653 1389,670 1399,687"/>
<g fill="none" stroke="#111" stroke-width="1.600">
<polyline points="122,703 135,697 143,660 151,647"/><polyline points="257,710 269,663"/><polyline points="306,735 322,710"/><polyline points="335,725 351,705 359,700 378,648"/><polyline points="420,742 445,677 463,650"/><polyline points="486,717 510,677 524,665"/><polyline points="553,718 569,658 586,650"/><polyline points="604,659 620,650"/><polyline points="677,718 693,695"/><polyline points="733,728 744,663 764,645"/><polyline points="878,708 894,657"/><polyline points="961,710 974,657"/><polyline points="1085,705 1095,695 1110,655"/><polyline points="1157,735 1172,700 1190,660"/><polyline points="1305,676 1313,660"/><polyline points="1333,697 1352,660"/>
</g>
<polyline fill="none" stroke="none" marker-start="url(#tu)" marker-mid="url(#tu)" marker-end="url(#tu)" points="29,666 44,664 54,655 78,655 128,703 189,675 200,669 229,715 256,712 307,735 341,725 357,703 420,742 492,717 559,708 604,659 632,659 643,657 653,655 682,715 716,724 732,728 795,658 823,653 833,653 851,658 878,708 912,655 930,654 963,708 985,665 1259,658 1277,658 1310,676 1338,696 1361,663"/>
<polyline fill="none" stroke="none" marker-start="url(#td)" marker-mid="url(#td)" marker-end="url(#td)" points="37,659 50,663 195,668 207,673 234,710 273,663 331,720 350,706 380,650 463,653 525,666 586,652 620,650 637,659 649,654 660,659 700,705 721,718 767,646 811,649 840,654 862,662 907,655 923,653 940,656 979,661 989,665 1265,653 1293,650 1320,662 1333,697 1354,663 1377,655"/>

<!-- PANEL 3 -->
<g clip-path="url(#p3)">
<g fill="#c0c0f8"><rect x="28" y="752" width="7" height="82"/><rect x="41" y="752" width="5" height="82"/><rect x="63" y="752" width="6" height="82"/><rect x="92" y="752" width="5" height="82"/><rect x="113" y="752" width="6" height="82"/><rect x="123" y="752" width="24" height="82"/><rect x="158" y="752" width="6" height="82"/><rect x="176" y="752" width="4" height="82"/><rect x="187" y="752" width="5" height="82"/><rect x="259" y="752" width="12" height="82"/><rect x="511" y="752" width="5" height="82"/><rect x="534" y="752" width="6" height="82"/><rect x="551" y="752" width="22" height="82"/><rect x="578" y="752" width="6" height="82"/><rect x="595" y="752" width="11" height="82"/><rect x="629" y="752" width="6" height="82"/><rect x="640" y="752" width="6" height="82"/><rect x="651" y="752" width="6" height="82"/><rect x="674" y="752" width="11" height="82"/><rect x="707" y="752" width="12" height="82"/><rect x="747" y="752" width="6" height="82"/><rect x="786" y="752" width="11" height="82"/><rect x="808" y="752" width="6" height="82"/><rect x="820" y="752" width="11" height="82"/><rect x="842" y="752" width="11" height="82"/><rect x="870" y="752" width="11" height="82"/><rect x="904" y="752" width="11" height="82"/><rect x="926" y="752" width="6" height="82"/><rect x="960" y="752" width="11" height="82"/><rect x="982" y="752" width="12" height="82"/><rect x="999" y="752" width="11" height="82"/><rect x="1027" y="752" width="6" height="82"/><rect x="1038" y="752" width="17" height="82"/><rect x="1066" y="752" width="6" height="82"/><rect x="1083" y="752" width="12" height="82"/><rect x="1111" y="752" width="7" height="82"/><rect x="1134" y="752" width="6" height="82"/><rect x="1179" y="752" width="5" height="82"/><rect x="1196" y="752" width="5" height="82"/><rect x="1207" y="752" width="6" height="82"/><rect x="1224" y="752" width="16" height="82"/><rect x="1245" y="752" width="6" height="82"/><rect x="1256" y="752" width="6" height="82"/><rect x="1273" y="752" width="12" height="82"/><rect x="1290" y="752" width="6" height="82"/><rect x="1302" y="752" width="11" height="82"/><rect x="1324" y="752" width="6" height="82"/><rect x="1335" y="752" width="12" height="82"/><rect x="1352" y="752" width="12" height="82"/><rect x="1369" y="752" width="6" height="82"/></g>
<g fill="#ffa4a4"><rect x="231" y="752" width="6" height="82"/><rect x="242" y="752" width="11" height="82"/><rect x="282" y="752" width="11" height="82"/><rect x="304" y="752" width="5" height="82"/><rect x="315" y="752" width="16" height="82"/><rect x="337" y="752" width="6" height="82"/><rect x="349" y="752" width="5" height="82"/><rect x="382" y="752" width="12" height="82"/><rect x="399" y="752" width="16" height="82"/><rect x="438" y="752" width="6" height="82"/><rect x="450" y="752" width="6" height="82"/><rect x="466" y="752" width="18" height="82"/><rect x="500" y="752" width="6" height="82"/><rect x="1145" y="752" width="6" height="82"/><rect x="1156" y="752" width="6" height="82"/></g>
<g fill="#70b870"><rect x="215" y="752" width="5" height="82"/><rect x="254" y="752" width="5" height="82"/><rect x="371" y="752" width="7" height="82"/><rect x="506" y="752" width="5" height="82"/><rect x="545" y="752" width="6" height="82"/><rect x="730" y="752" width="6" height="82"/><rect x="1162" y="752" width="5" height="82"/></g>
<g fill="#bc6464"><rect x="209" y="752" width="6" height="82"/><rect x="226" y="752" width="5" height="82"/><rect x="276" y="752" width="6" height="82"/><rect x="378" y="752" width="4" height="82"/><rect x="540" y="752" width="5" height="82"/><rect x="724" y="752" width="6" height="82"/><rect x="1140" y="752" width="5" height="82"/></g>
<polygon clip-path="url(#ga)" fill="#3a963a" fill-opacity=".45" points="28,777 28,765 110,768 122,773 141,760 163,762 171,773 182,762 200,772 206,773 210,790 510,790 510,778 527,782 541,797 555,787 563,778 592,775 604,760 624,763 640,762 656,762 667,772 673,780 683,767 693,773 703,787 728,802 734,780 754,760 775,762 785,768 793,758 815,763 856,762 869,777 889,760 934,760 956,777 967,760 979,775 985,762 1007,760 1028,770 1038,768 1048,760 1064,770 1081,775 1091,760 1105,765 1120,773 1130,793 1183,793 1183,772 1189,775 1203,768 1215,768 1220,760 1240,760 1244,768 1249,760 1296,760 1300,768 1309,760 1330,768 1337,761 1387,763 1399,768 1399,777"/>
</g>
<path d="M28 759.500H1400M28 830.500H1400" stroke="#000" stroke-dasharray="5 4"/>
<path d="M28 795.500H1400" stroke="#1010a0" stroke-width="2" stroke-dasharray="6 5"/>
<path d="M28 777H1400" stroke="#2020a0" stroke-width="2"/>
<path d="M28 814H1400" stroke="#c01010" stroke-width="2"/>
<polyline class="pl" stroke="#10c010" stroke-width="4" points="28,765 110,768 122,773 141,760 163,762 171,773 182,762 200,772 206,773 210,790 233,800 249,818 255,798 265,787 273,793 282,803 290,827 304,820 312,807 318,810 327,828 335,815 351,817 363,802 375,793 388,812 396,805 408,828 424,823 435,805 443,812 449,800 461,795 480,810 490,808 502,795 510,778 527,782 541,797 555,787 563,778 592,775 604,760 624,763 640,762 656,762 667,772 673,780 683,767 693,773 703,787 715,785 728,802 734,780 754,760 775,762 785,768 793,758 815,763 856,762 869,777 889,760 934,760 956,777 967,760 979,775 985,762 1007,760 1028,770 1038,768 1048,760 1064,770 1081,775 1091,760 1105,765 1120,773 1130,793 1136,793 1146,830 1154,803 1173,783 1183,772 1189,775 1203,768 1215,768 1220,760 1240,760 1244,768 1249,760 1296,760 1300,768 1309,760 1330,768 1337,761 1387,763 1399,768"/>
<g fill="none" stroke-width="4" stroke-linejoin="round">
<g stroke="#f09020"><polyline points="206,773 210,790 214,795"/><polyline points="220,795 233,800 249,818"/><polyline points="265,787 273,793"/><polyline points="312,807 318,810"/><polyline points="375,793 388,812"/><polyline points="461,795 480,810"/><polyline points="527,782 541,797"/><polyline points="667,772 673,780"/><polyline points="693,773 703,787"/><polyline points="715,785 728,802"/><polyline points="1120,773 1130,793 1136,793"/></g>
<g stroke="#0000c0"><polyline points="249,818 255,798 265,787"/><polyline points="304,820 312,807"/><polyline points="351,817 363,802 375,793"/><polyline points="388,812 396,805"/><polyline points="449,800 461,795"/><polyline points="480,810 490,808 502,795 510,778"/><polyline points="541,797 555,787 563,778"/><polyline points="703,787 715,785"/><polyline points="728,802 734,780"/><polyline points="1146,830 1154,803 1173,783"/></g>
<g stroke="#a00000"><polyline points="273,793 282,803 290,827 304,820"/><polyline points="318,810 327,828 335,815 351,817"/><polyline points="396,805 408,828 424,823 435,805 443,812"/><polyline points="1136,793 1146,830"/></g>
</g>
<polyline fill="none" stroke="none" marker-start="url(#Td)" marker-mid="url(#Td)" marker-end="url(#Td)" points="206,795 223,795 273,795 375,795 537,795 722,795 1137,795"/>
<polyline fill="none" stroke="none" marker-start="url(#Tu)" marker-mid="url(#Tu)" marker-end="url(#Tu)" points="212,796 250,796 369,796 504,796 543,796 728,796 1158,796"/>

<!-- PANEL 4 -->
<g clip-path="url(#sg)"><rect x="28" y="835" width="1372" height="102" fill="url(#sp)"/></g>
<g clip-path="url(#os)">
<rect x="28" y="835" width="1372" height="51" fill="url(#sm)"/>
<g fill="#fff"><rect x="45" y="835" width="17" height="51"/><rect x="120" y="835" width="45" height="51"/><rect x="175" y="835" width="25" height="51"/><rect x="350" y="835" width="35" height="51"/><rect x="437" y="835" width="28" height="51"/><rect x="500" y="835" width="20" height="51"/><rect x="552" y="835" width="48" height="51"/><rect x="604" y="835" width="46" height="51"/><rect x="740" y="835" width="75" height="51"/><rect x="875" y="835" width="15" height="51"/><rect x="895" y="835" width="40" height="51"/><rect x="990" y="835" width="15" height="51"/><rect x="1035" y="835" width="15" height="51"/><rect x="1095" y="835" width="15" height="51"/><rect x="1190" y="835" width="50" height="51"/><rect x="1300" y="835" width="20" height="51"/><rect x="1333" y="835" width="12" height="51"/></g>
<g fill="url(#sb)"><rect x="45" y="835" width="17" height="51"/><rect x="120" y="835" width="45" height="51"/><rect x="175" y="835" width="25" height="51"/><rect x="350" y="835" width="35" height="51"/><rect x="437" y="835" width="28" height="51"/><rect x="500" y="835" width="20" height="51"/><rect x="552" y="835" width="48" height="51"/><rect x="604" y="835" width="46" height="51"/><rect x="740" y="835" width="75" height="51"/><rect x="875" y="835" width="15" height="51"/><rect x="895" y="835" width="40" height="51"/><rect x="990" y="835" width="15" height="51"/><rect x="1035" y="835" width="15" height="51"/><rect x="1095" y="835" width="15" height="51"/><rect x="1190" y="835" width="50" height="51"/><rect x="1300" y="835" width="20" height="51"/><rect x="1333" y="835" width="12" height="51"/></g>
<rect x="28" y="886" width="1372" height="52" fill="url(#sr)"/>
<g fill="#fff"><rect x="240" y="886" width="30" height="52"/><rect x="320" y="886" width="25" height="52"/><rect x="345" y="886" width="20" height="52"/><rect x="425" y="886" width="25" height="52"/><rect x="730" y="886" width="15" height="52"/><rect x="1155" y="886" width="35" height="52"/></g>
<g fill="url(#st)"><rect x="240" y="886" width="30" height="52"/><rect x="320" y="886" width="25" height="52"/><rect x="345" y="886" width="20" height="52"/><rect x="425" y="886" width="25" height="52"/><rect x="730" y="886" width="15" height="52"/><rect x="1155" y="886" width="35" height="52"/></g>
</g>
<path d="M28 886H1400" stroke="#1818f0" stroke-width="2"/>
<polyline class="pl" stroke="#b000b0" stroke-width="4" points="28,870 45,875 53,871 98,872 114,878 131,885 163,866 180,878 196,873 208,880 216,895 241,900 253,907 269,885 286,897 306,915 335,920 359,903 380,873 396,887 408,897 424,913 437,903 453,883 463,876 478,883 502,883 518,872 551,890 567,878 600,877 624,872 652,865 677,882 689,878 705,890 730,902 750,878 775,863 811,857 860,862 875,882 893,870 934,863 958,883 987,878 995,868 1032,863 1056,861 1085,883 1099,874 1115,877 1130,900 1152,933 1171,910 1187,878 1224,848 1238,848 1256,855 1287,855 1305,867 1315,862 1330,873 1343,868 1374,872 1399,878"/>
<g fill="none" stroke="#101040" stroke-width="4" stroke-linejoin="round">
<polyline points="45,875 53,871"/><polyline points="65,871 98,872" stroke-dasharray="6 8"/><polyline points="131,885 147,875"/><polyline points="180,878 196,873"/><polyline points="253,907 269,885"/><polyline points="335,920 359,903 380,873"/><polyline points="424,913 437,903 453,883 461,877"/><polyline points="490,883 502,883 518,872"/><polyline points="551,890 567,878"/><polyline points="677,882 689,878"/><polyline points="730,902 750,878 775,863"/><polyline points="875,882 893,870"/><polyline points="1020,865 1032,863 1052,861"/><polyline points="1085,883 1099,874"/><polyline points="1152,933 1171,910 1187,878 1224,848"/><polyline points="1305,867 1315,862"/><polyline points="1330,873 1343,868"/><polyline points="1354,870 1374,872" stroke-dasharray="6 3"/>
</g>
<polyline class="pl" stroke="#70f070" stroke-width="4" points="28,863 49,865 82,863 106,863 122,868 139,877 163,865 188,870 200,869 216,877 233,888 257,900 282,890 294,903 310,913 331,915 351,923 367,907 388,890 404,893 429,913 449,900 473,883 498,888 531,875 555,885 580,875 604,873 633,866 662,859 689,870 709,877 732,888 746,883 771,868 803,866 824,857 852,849 889,863 922,858 938,855 967,868 987,867 1015,863 1056,857 1089,868 1115,867 1142,887 1167,917 1179,910 1199,883 1240,860 1266,853 1296,845 1318,843 1339,850 1361,857 1399,867"/>
<g fill="none" stroke="#f09418" stroke-width="4" stroke-linejoin="round">
<polyline points="28,863 49,865"/><polyline points="106,863 122,868 139,877"/><polyline points="163,865 188,870 200,869 216,877 233,888 257,900"/><polyline points="282,890 294,903 310,913 331,915 351,923"/><polyline points="388,890 404,893 429,913"/><polyline points="473,883 498,888"/><polyline points="531,875 555,885"/><polyline points="662,859 689,870 709,877 732,888"/><polyline points="852,849 889,863"/><polyline points="938,855 967,868"/><polyline points="1056,857 1089,868"/><polyline points="1115,867 1142,887 1167,917"/><polyline points="1318,843 1339,850 1361,857"/><polyline points="1366,858 1399,867"/>
</g>
<polyline fill="none" stroke="none" marker-start="url(#cu)" marker-mid="url(#cu)" marker-end="url(#cu)" points="263,893 319,905 341,915 431,910 492,887 559,884 616,872 745,884 973,870 1171,907"/>
<polyline fill="none" stroke="none" marker-start="url(#yd)" marker-mid="url(#yd)" marker-end="url(#yd)" points="285,892 330,917 414,907 481,887 532,877 582,875 633,867 822,857 980,874 1266,855"/>

<!-- PANEL 5 -->
<rect x="28" y="940" width="1374" height="56" fill="#b0e8ff"/>
<g fill="#6868c0"><rect x="41" y="940" width="5" height="56"/><rect x="63" y="940" width="6" height="56"/><rect x="125" y="940" width="17" height="56"/><rect x="164" y="940" width="28" height="56"/><rect x="198" y="940" width="61" height="56"/><rect x="282" y="940" width="33" height="56"/><rect x="321" y="940" width="22" height="56"/><rect x="400" y="940" width="29" height="56"/><rect x="439" y="940" width="11" height="56"/><rect x="472" y="940" width="6" height="56"/><rect x="512" y="940" width="5" height="56"/><rect x="540" y="940" width="22" height="56"/><rect x="736" y="940" width="11" height="56"/><rect x="876" y="940" width="6" height="56"/><rect x="954" y="940" width="17" height="56"/><rect x="977" y="940" width="11" height="56"/><rect x="1027" y="940" width="17" height="56"/><rect x="1061" y="940" width="45" height="56"/><rect x="1117" y="940" width="17" height="56"/><rect x="1139" y="940" width="34" height="56"/><rect x="1302" y="940" width="11" height="56"/><rect x="1319" y="940" width="22" height="56"/><rect x="1397" y="940" width="5" height="56"/></g>
<g fill="#ffff80"><rect x="80" y="940" width="34" height="56"/><rect x="579" y="940" width="61" height="56"/><rect x="646" y="940" width="23" height="56"/><rect x="685" y="940" width="12" height="56"/><rect x="753" y="940" width="33" height="56"/><rect x="797" y="940" width="6" height="56"/><rect x="837" y="940" width="5" height="56"/><rect x="848" y="940" width="11" height="56"/><rect x="898" y="940" width="6" height="56"/><rect x="910" y="940" width="28" height="56"/><rect x="1285" y="940" width="11" height="56"/><rect x="1375" y="940" width="11" height="56"/></g>
<g fill="#40f840"><rect x="87" y="940" width="4" height="56"/><rect x="114" y="940" width="5" height="56"/><rect x="618" y="940" width="6" height="56"/><rect x="629" y="940" width="17" height="56"/><rect x="669" y="940" width="16" height="56"/><rect x="697" y="940" width="33" height="56"/><rect x="786" y="940" width="11" height="56"/><rect x="803" y="940" width="34" height="56"/><rect x="842" y="940" width="6" height="56"/><rect x="859" y="940" width="11" height="56"/><rect x="904" y="940" width="6" height="56"/><rect x="938" y="940" width="11" height="56"/><rect x="1386" y="940" width="6" height="56"/></g>
<g fill="#700000"><rect x="119" y="940" width="6" height="56"/><rect x="730" y="940" width="6" height="56"/><rect x="870" y="940" width="6" height="56"/><rect x="949" y="940" width="5" height="56"/><rect x="1296" y="940" width="6" height="56"/><rect x="1392" y="940" width="5" height="56"/></g>
<g clip-path="url(#br)">
<rect x="28" y="940" width="1374" height="56" fill="url(#br1)"/>
<g fill="url(#bb1)"><rect x="41" y="940" width="6" height="56"/><rect x="63" y="940" width="6" height="56"/><rect x="114" y="940" width="30" height="56"/><rect x="164" y="940" width="95" height="56"/><rect x="282" y="940" width="58" height="56"/><rect x="400" y="940" width="29" height="56"/><rect x="439" y="940" width="11" height="56"/><rect x="472" y="940" width="6" height="56"/><rect x="512" y="940" width="5" height="56"/><rect x="540" y="940" width="22" height="56"/><rect x="590" y="940" width="18" height="56"/><rect x="632" y="940" width="6" height="56"/><rect x="663" y="940" width="30" height="56"/><rect x="715" y="940" width="35" height="56"/><rect x="790" y="940" width="25" height="56"/><rect x="840" y="940" width="35" height="56"/><rect x="935" y="940" width="36" height="56"/><rect x="977" y="940" width="11" height="56"/><rect x="1027" y="940" width="17" height="56"/><rect x="1061" y="940" width="45" height="56"/><rect x="1117" y="940" width="56" height="56"/><rect x="1302" y="940" width="11" height="56"/><rect x="1319" y="940" width="22" height="56"/><rect x="1385" y="940" width="17" height="56"/></g>
</g>
<path d="M28 988H1402" stroke="#000" stroke-width="1.200"/>

<!-- panel separators and axis -->
<path d="M28 634.500H1916M28 752.500H1916M28 834.500H1916M28 939.500H1916M28 996.500H1916" stroke="#7a9098" stroke-width="1.300"/>
<path d="M1874.500 22V997" stroke="#7a9098" stroke-width="1.300"/>

<!-- ticks -->
<path d="M1874 27h5M1874 98h5M1874 115h5M1874 127h5M1874 160h5M1874 174h5M1874 249h5M1874 325h5M1874 401h5M1874 477h5M1874 552h5M1874 628h5M1874 642h4M1874 652h5M1874 665h5M1874 681h4M1874 687h4M1874 697h4M1874 706h4M1874 726h5M1874 745h5M1874 759h5M1874 770h4M1874 777h5M1874 796h5M1874 814h5M1874 830h5M1874 849h5M1874 867h5M1874 882h5M1874 921h5M1874 962h5M1874 985h4M1874 990h5" stroke="#333"/>

<!-- price axis -->
<text class="ax" x="1881" y="31" textLength="24" lengthAdjust="spacingAndGlyphs">7.500</text>
<text class="ax" x="1881" y="102" textLength="24" lengthAdjust="spacingAndGlyphs">7.000</text>
<text class="ax" x="1881" y="178" textLength="24" lengthAdjust="spacingAndGlyphs">6.500</text>
<text class="ax" x="1881" y="253" textLength="24" lengthAdjust="spacingAndGlyphs">6.000</text>
<text class="ax" x="1881" y="329" textLength="24" lengthAdjust="spacingAndGlyphs">5.500</text>
<text class="ax" x="1881" y="405" textLength="24" lengthAdjust="spacingAndGlyphs">5.000</text>
<text class="ax" x="1881" y="481" textLength="24" lengthAdjust="spacingAndGlyphs">4.500</text>
<text class="ax" x="1881" y="556" textLength="24" lengthAdjust="spacingAndGlyphs">4.000</text>
<text class="ax" x="1881" y="632" textLength="24" lengthAdjust="spacingAndGlyphs">3.500</text>
<rect class="vb" x="1879.500" y="109.500" width="40" height="11"/><text x="1881" y="119" textLength="34" lengthAdjust="spacingAndGlyphs" style="fill:#204020;font-weight:bold">6.884,27</text>
<rect class="vb" x="1879.500" y="121.500" width="40" height="11"/><text x="1881" y="131" textLength="34" lengthAdjust="spacingAndGlyphs" style="fill:#a01818;font-weight:bold">6.833,86</text>
<rect class="vb" x="1879.500" y="154.500" width="40" height="11"/><text x="1881" y="164" textLength="34" lengthAdjust="spacingAndGlyphs" style="fill:#1010a0;font-weight:bold">6.597,99</text>

<!-- panel 2 axis -->
<rect class="vb" x="1879.500" y="636.500" width="17" height="9"/><text class="ax" x="1881" y="645" textLength="15" lengthAdjust="spacingAndGlyphs">100</text>
<rect class="vb" x="1879.500" y="645.500" width="30" height="12"/><text x="1881" y="656" textLength="27" lengthAdjust="spacingAndGlyphs" style="fill:#f01010">94,686</text>
<rect class="vb" x="1879.500" y="659.500" width="13" height="11"/><text class="ax" x="1881" y="669" textLength="10" lengthAdjust="spacingAndGlyphs">80</text>
<rect class="vb" x="1879.500" y="672.500" width="30" height="9"/><text class="ax" x="1881" y="681" textLength="27" lengthAdjust="spacingAndGlyphs">64,504</text>
<rect class="vb" x="1879.500" y="680.500" width="30" height="12"/><text x="1881" y="691" textLength="27" lengthAdjust="spacingAndGlyphs" style="fill:#f01010">59,270</text>
<text class="ax" x="1881" y="710" textLength="10" lengthAdjust="spacingAndGlyphs">40</text>
<rect class="vb" x="1879.500" y="692.500" width="13" height="10"/><text x="1881" y="702" textLength="10" lengthAdjust="spacingAndGlyphs" style="fill:#1010c0">50</text>
<rect class="vb" x="1879.500" y="719.500" width="13" height="13"/><text class="ax" x="1881" y="730" textLength="10" lengthAdjust="spacingAndGlyphs">20</text>
<rect class="vb" x="1879.500" y="738.500" width="7" height="12"/><text class="ax" x="1881" y="749">0</text>

<!-- panel 3 axis -->
<text class="ax" x="1881" y="763">0</text>
<rect class="vb" x="1877.500" y="764.500" width="37" height="11"/><text x="1879" y="774" textLength="34" lengthAdjust="spacingAndGlyphs" style="fill:#10c010">-14,247</text>
<rect class="vb" x="1879.500" y="773.500" width="16" height="12"/><text x="1881" y="784" textLength="13" lengthAdjust="spacingAndGlyphs" style="fill:#101090">-25</text>
<rect class="vb" x="1879.500" y="790.500" width="16" height="12"/><text x="1881" y="800" textLength="13" lengthAdjust="spacingAndGlyphs" style="fill:#101090">-50</text>
<rect class="vb" x="1879.500" y="807.500" width="16" height="12"/><text x="1881" y="818" textLength="13" lengthAdjust="spacingAndGlyphs" style="fill:#b01010">-75</text>
<rect class="vb" x="1879.500" y="821.500" width="21" height="12"/><text class="ax" x="1881" y="832" textLength="18" lengthAdjust="spacingAndGlyphs">-100</text>

<!-- panel 4 axis -->
<text class="ax" x="1881" y="853" textLength="15" lengthAdjust="spacingAndGlyphs">500</text>
<rect class="vb" x="1879.500" y="856.500" width="30" height="7"/><text x="1881" y="864" textLength="27" lengthAdjust="spacingAndGlyphs" style="fill:#c02020">288,28</text>
<rect class="vb" x="1879.500" y="862.500" width="30" height="12"/><text x="1881" y="872" textLength="27" lengthAdjust="spacingAndGlyphs" style="fill:#f09420">268,26</text>
<rect class="vb" x="1879.500" y="874.500" width="30" height="12"/><text x="1881" y="884" textLength="27" lengthAdjust="spacingAndGlyphs" style="fill:#f000e0">85,091</text>
<rect class="vb" x="1879.500" y="887.500" width="8" height="11"/><text x="1881" y="897" style="fill:#f000e0">0</text>
<text class="ax" x="1881" y="925" textLength="18" lengthAdjust="spacingAndGlyphs">-500</text>

<!-- panel 5 axis -->
<text class="ax" x="1881" y="966">1</text>
<rect class="vb" x="1879.500" y="975.500" width="30" height="9"/><text x="1881" y="984" textLength="27" lengthAdjust="spacingAndGlyphs" style="fill:#1010c0">0,5514</text>
<rect class="vb" x="1879.500" y="983.500" width="30" height="12"/><text class="ax" x="1881" y="994" textLength="27" lengthAdjust="spacingAndGlyphs">0,5000</text>

<!-- x axis -->
<path d="M53 996v4M106 996v4M150 996v4M200 996v4M250 996v4M295 996v4M346 996v4M397 996v4M447 996v4M491 996v4M542 996v4M587 996v4M637 996v4M689 996v4M738 996v4M783 996v4M833 996v4M884 996v4M929 996v4M980 996v4M1029 996v4M1080 996v4M1125 996v4M1175 996v4M1226 996v4M1271 996v4M1321 996v4M1371 996v4M1416 996v4M1467 996v4M1517 996v4M1568 996v4M1612 996v4M1663 996v4M1708 996v4M1758 996v4M1809 996v4M1860 996v4" stroke="#444"/>
<g class="mo" text-anchor="middle">
<text class="mo" x="53" y="1009" text-anchor="middle">jul</text><text class="mo" x="106" y="1009" text-anchor="middle">sept</text><text class="mo" x="150" y="1009" text-anchor="middle">nov</text><text class="mo" x="200" y="1009" text-anchor="middle">2022</text><text class="mo" x="250" y="1009" text-anchor="middle">mar</text><text class="mo" x="295" y="1009" text-anchor="middle">may</text><text class="mo" x="346" y="1009" text-anchor="middle">jul</text><text class="mo" x="397" y="1009" text-anchor="middle">sept</text><text class="mo" x="447" y="1009" text-anchor="middle">nov</text><text class="mo" x="491" y="1009" text-anchor="middle">2023</text><text class="mo" x="542" y="1009" text-anchor="middle">mar</text><text class="mo" x="587" y="1009" text-anchor="middle">may</text><text class="mo" x="637" y="1009" text-anchor="middle">jul</text><text class="mo" x="689" y="1009" text-anchor="middle">sept</text><text class="mo" x="738" y="1009" text-anchor="middle">nov</text><text class="mo" x="783" y="1009" text-anchor="middle">2024</text><text class="mo" x="833" y="1009" text-anchor="middle">mar</text><text class="mo" x="884" y="1009" text-anchor="middle">may</text><text class="mo" x="929" y="1009" text-anchor="middle">jul</text><text class="mo" x="980" y="1009" text-anchor="middle">sept</text><text class="mo" x="1029" y="1009" text-anchor="middle">nov</text><text class="mo" x="1080" y="1009" text-anchor="middle">2025</text><text class="mo" x="1125" y="1009" text-anchor="middle">mar</text><text class="mo" x="1175" y="1009" text-anchor="middle">may</text><text class="mo" x="1226" y="1009" text-anchor="middle">jul</text><text class="mo" x="1271" y="1009" text-anchor="middle">sept</text><text class="mo" x="1321" y="1009" text-anchor="middle">nov</text><text class="mo" x="1371" y="1009" text-anchor="middle">2026</text><text class="mo" x="1416" y="1009" text-anchor="middle">mar</text><text class="mo" x="1467" y="1009" text-anchor="middle">may</text><text class="mo" x="1517" y="1009" text-anchor="middle">jul</text><text class="mo" x="1568" y="1009" text-anchor="middle">sept</text><text class="mo" x="1612" y="1009" text-anchor="middle">nov</text><text class="mo" x="1663" y="1009" text-anchor="middle">2027</text><text class="mo" x="1708" y="1009" text-anchor="middle">mar</text><text class="mo" x="1758" y="1009" text-anchor="middle">may</text><text class="mo" x="1809" y="1009" text-anchor="middle">jul</text><text class="mo" x="1860" y="1009" text-anchor="middle">sept</text>
</g>

<!-- panel headers -->
<rect class="hd" x="28.500" y="635.500" width="165" height="16"/><path d="M44.500 636v15" stroke="#8fa5b0"/><use href="#xc" x="35" y="643"/><rect x="47" y="639" width="8" height="9" fill="#222"/><rect x="47" y="639" width="3" height="9" fill="#778"/><text x="60" y="647" textLength="131" lengthAdjust="spacingAndGlyphs">Sistema de trenes Doc v4 (f f)</text>
<rect class="hd" x="28.500" y="752.500" width="90" height="16"/><path d="M44.500 753v15" stroke="#8fa5b0"/><use href="#xc" x="35" y="760"/><rect x="47" y="757" width="8" height="8" fill="#6b8088"/><text x="59" y="765" textLength="56" lengthAdjust="spacingAndGlyphs">Willy Doc (t)</text>
<rect class="hd" x="28.500" y="835.500" width="142" height="15"/><path d="M44.500 836v14" stroke="#8fa5b0"/><use href="#xc" x="35" y="842"/><rect x="47" y="839" width="8" height="8" fill="#6b8088"/><text x="59" y="847" textLength="109" lengthAdjust="spacingAndGlyphs">Awesome Evolution Doc</text>
<rect class="hd" x="28.500" y="940.500" width="191" height="15"/><path d="M44.500 941v14" stroke="#8fa5b0"/><use href="#xc" x="35" y="947"/><rect x="47" y="944" width="8" height="8" fill="#111"/><rect x="47" y="944" width="3" height="8" fill="#778"/><text x="59" y="952" textLength="158" lengthAdjust="spacingAndGlyphs">Barra Fuerza Fondo Mercado v4 (f)</text>

<!-- legend row -->
<rect class="hd" x="28.500" y="22.500" width="423" height="16"/>
<path d="M71.500 23v15M118.500 23v15M135.500 23v15M199.500 23v15M337.500 23v15" stroke="#8fa5b0"/>
<rect x="30.500" y="25.500" width="10" height="10" fill="#fff" stroke="#90a0a8"/><path d="M35.500 34L32 29.500h2v-3h3v3h2z" fill="#e02020"/>
<rect x="44.500" y="25.500" width="10" height="10" fill="#fff" stroke="#90a0a8"/><path d="M49.500 26.500L53 31h-2v3h-3v-3h-2z" fill="#20b020"/>
<use href="#xc" x="62.500" y="30.500"/>
<rect x="75.500" y="26.500" width="7" height="8" fill="#eef3f5" stroke="#7a8c94"/>
<text x="87" y="35" textLength="29" lengthAdjust="spacingAndGlyphs">Precio</text>
<path d="M123 27h2M123 30.500h2M123 34h2M126 27h6M126 30.500h6M126 34h6" stroke="#333" stroke-width="1.500"/>
<rect x="139.500" y="26.500" width="7" height="8" fill="#eef3f5" stroke="#7a8c94"/>
<text x="151" y="35" textLength="46" lengthAdjust="spacingAndGlyphs">Cierre (W)</text>
<rect x="203" y="26" width="8" height="9" fill="#6f8790"/>
<text x="215" y="35" textLength="120" lengthAdjust="spacingAndGlyphs">Tunel Domenec v4 (t t t t t)</text>
<path d="M340.500 26v9" stroke="#d04040" stroke-width="1.200"/><path d="M342.500 26v9" stroke="#109040" stroke-width="1.200"/><path d="M344.500 26v9" stroke="#2040c0" stroke-width="1.200"/><path d="M346.500 26v9" stroke="#d0a020" stroke-width="1.200"/>
<text x="352" y="35" textLength="97" lengthAdjust="spacingAndGlyphs">Control Total Doc v.6</text>

<!-- top toolbar -->
<rect width="1916" height="22" fill="url(#tb)"/>
<path d="M0 .5H1916" stroke="#40606f"/><path d="M0 21.500H1916" stroke="#3f5f70" stroke-width="1.500"/>
<path d="M7 9v6M11 7v7M15 6v6M19 4v7" stroke="#2a9a30" stroke-width="2"/><path d="M5 13h4M9 10h4" stroke="#70a060" stroke-width="1"/>
<path d="M24.500 1v20M38.500 1v20M92.500 1v20M330.500 1v20M393.500 1v20M486.500 1v20M570.500 1v20M655.500 1v20M668.500 1v20M1850.500 1v20M1870.500 1v20" class="d"/>
<rect x="27" y="5" width="6" height="5" rx="1.500" fill="none" stroke="#6b8696"/><rect x="27" y="12" width="6" height="5" rx="1.500" fill="none" stroke="#6b8696"/>
<text x="44" y="15" textLength="30" lengthAdjust="spacingAndGlyphs">SPTRD</text><path d="M79.500 9l2.500 2.500L84.500 9" stroke="#333" fill="none" stroke-width="1.200"/>
<rect class="btn" x="95.500" y="4.500" width="20" height="15" rx="3"/><text x="99" y="15" textLength="13" lengthAdjust="spacingAndGlyphs">12s</text>
<rect class="btn" x="119.500" y="4.500" width="25" height="15" rx="3"/><text x="122.500" y="15" textLength="19" lengthAdjust="spacingAndGlyphs">144s</text>
<rect class="btn" x="148.500" y="4.500" width="18" height="15" rx="3"/><text x="151.500" y="15" textLength="12" lengthAdjust="spacingAndGlyphs">1m</text>
<rect class="btn" x="170.500" y="4.500" width="23" height="15" rx="3"/><text x="173.500" y="15" textLength="17" lengthAdjust="spacingAndGlyphs">12m</text>
<rect class="btn" x="197.500" y="4.500" width="23" height="15" rx="3"/><text x="200.500" y="15" textLength="17" lengthAdjust="spacingAndGlyphs">56m</text>
<rect class="btn" x="225.500" y="4.500" width="16" height="15" rx="3"/><text x="228" y="15" textLength="11" lengthAdjust="spacingAndGlyphs">1h</text>
<rect class="btn" x="245.500" y="4.500" width="15" height="15" rx="3"/><text x="247.500" y="15" textLength="11" lengthAdjust="spacingAndGlyphs">4h</text>
<rect class="btn" x="264.500" y="4.500" width="12" height="15" rx="3"/><text x="267" y="15">D</text>
<rect class="on" x="280.500" y="4.500" width="15" height="15" rx="3"/><text x="282" y="15">W</text>
<rect class="btn" x="298.500" y="4.500" width="13" height="15" rx="3"/><text x="300" y="15">M</text>
<rect class="btn" x="315.500" y="4.500" width="11" height="15" rx="3"/><text x="316.500" y="15">Q</text>
<text x="336" y="15" textLength="42" lengthAdjust="spacingAndGlyphs">1 semana</text><path d="M383.500 9.500l2.500 2.500 2.500-2.500" stroke="#333" fill="none" stroke-width="1.200"/>
<rect class="btn" x="397.500" y="4.500" width="22" height="15" rx="3"/><text x="400.500" y="15" textLength="16" lengthAdjust="spacingAndGlyphs">5kU</text>
<rect class="on" x="423.500" y="4.500" width="27" height="15" rx="3"/><text x="426" y="15" textLength="22" lengthAdjust="spacingAndGlyphs">10kU</text>
<rect class="btn" x="454.500" y="4.500" width="27" height="15" rx="3"/><text x="457" y="15" textLength="22" lengthAdjust="spacingAndGlyphs">35kU</text>
<text x="491" y="15" textLength="63" lengthAdjust="spacingAndGlyphs">10 k unidades</text><path d="M559.500 9.500l2.500 2.500 2.500-2.500" stroke="#333" fill="none" stroke-width="1.200"/>
<path d="M576 5l4 4 5-1 6 5" stroke="#d03030" fill="none"/><path d="M576 9l5 1 4 3 6-3" stroke="#20a040" fill="none"/><rect x="576" y="15" width="3" height="4" fill="#20a040"/><rect x="580" y="16" width="3" height="3" fill="#d03030"/><rect x="584" y="14" width="3" height="5" fill="#20a040"/><rect x="588" y="15" width="3" height="4" fill="#d03030"/>
<text x="596" y="15" textLength="54" lengthAdjust="spacingAndGlyphs">Indicadores</text><path d="M658.500 9.500l2.500 2.500 2.500-2.500" stroke="#333" fill="none" stroke-width="1.200"/>
<rect x="676.500" y="6.500" width="9" height="11" fill="#e8eef0" stroke="#8a9aa2"/><text x="679.500" y="16" style="font-size:10px;fill:#8a9aa2;font-weight:bold">i</text>
<circle cx="698" cy="11.500" r="3.500" fill="#8a9298" stroke="#6a7278"/>
<rect x="707" y="4.500" width="38" height="13" rx="2" fill="#f04a52"/><text x="710" y="15" textLength="33" lengthAdjust="spacingAndGlyphs" style="fill:#fff">-0,06 %</text>
<text x="750" y="15" textLength="49" lengthAdjust="spacingAndGlyphs" style="font-weight:bold;fill:#102030">13 feb 2026</text>
<rect x="803.500" y="4.500" width="92" height="13" rx="3" fill="#c6d8a8" stroke="#a0b880"/><text x="806" y="15" textLength="87" lengthAdjust="spacingAndGlyphs">EEUU 500 Cash (1€)</text>
<path d="M1857 6a5 5 0 0 1 7-1" stroke="#e03030" fill="none" stroke-width="2"/><path d="M1855 9l2-4 3 3z" fill="#e03030"/><path d="M1865 15a5 5 0 0 1-7 2" stroke="#20b030" fill="none" stroke-width="2"/><path d="M1867 12l-2 5-3-3z" fill="#20b030"/>
<path d="M1876 16h8" stroke="#6c8696" stroke-width="2"/><rect x="1889.500" y="10.500" width="6" height="6" fill="none" stroke="#6c8696" stroke-width="1.200"/><path d="M1892 10V8h6v6h-2" fill="none" stroke="#6c8696" stroke-width="1.200"/><path d="M1903 7l8 9M1911 7l-8 9" stroke="#6c8696" stroke-width="1.800"/>

<!-- left toolbar -->
<rect x="0" y="22" width="28" height="989" fill="#9ab6c5"/>
<rect x="0" y="22" width="1.500" height="989" fill="#5a7a8a"/>
<path d="M27.500 22V1011" stroke="#7a98a8"/>
<path d="M10 30l3.500-3 3.500 3" stroke="#c0d0d8" fill="none" stroke-width="1.300"/>
<rect x="3.500" y="35.500" width="21" height="21" rx="3" fill="#8ea8b6" stroke="#6b8696"/><path d="M11 39v13l3-3 2 5 2-1-2-5h4z" fill="#c8d0d8" stroke="#505860" stroke-width=".8"/>
<circle cx="13" cy="67" r="4.500" fill="none" stroke="#222" stroke-width="1.200"/><path d="M16 70l5 5" stroke="#222" stroke-width="1.800"/>
<circle cx="14" cy="90" r="4.500" fill="none" stroke="#222" stroke-width="1.200"/><path d="M17 93l5 5" stroke="#222" stroke-width="1.800"/><path d="M6 87v9h9" stroke="#1040e0" fill="none" stroke-dasharray="2 1"/>
<use href="#bell" x="13" y="113"/><path d="M17 104l6 6M23 104l-6 6" stroke="#1040e0"/>
<use href="#bell" x="14" y="134"/><path d="M6 129l-2-2M22 129l2-2" stroke="#777"/>
<path d="M5 164l4-9 3 6 10 .5" stroke="#1030c0" fill="none" stroke-width="1.300"/><path d="M12 158h11" stroke="#f08060" stroke-dasharray="2 1"/><text x="20" y="167" style="font-size:9px;font-weight:bold;fill:#1040e0">F</text>
<path d="M10 179h11" stroke="#f08060" stroke-dasharray="2 1"/><path d="M10 182h9" stroke="#1040e0"/><text x="20" y="187" style="font-size:9px;font-weight:bold;fill:#1040e0">F</text>
<rect x="9.500" y="196.500" width="12" height="8" fill="none" stroke="#1040e0"/><path d="M7 204h4M9 202v4M19 197h4M21 195v4" stroke="#1040e0"/>
<rect x="9.500" y="218.500" width="12" height="8" fill="#b8a8a8" stroke="#e02020" stroke-width="1.300"/><path d="M7 226h4M9 224v4M19 219h4M21 217v4" stroke="#1040e0"/>
<path d="M11 247l8-7" stroke="#111" stroke-width="2"/><path d="M21 238l-6 1 4 4z" fill="#111"/><circle cx="10" cy="248" r="2" fill="none" stroke="#111"/>
<rect x="7.500" y="258.500" width="13" height="13" rx="3" fill="#a0c0e0" stroke="#5080e0"/><text x="10" y="269" style="font-weight:bold;font-size:11px;fill:#111">T</text>
<circle cx="14" cy="287" r="7" fill="#a0c0e0" stroke="#5080e0"/><text x="10.500" y="291" style="font-weight:bold;font-size:11px;fill:#108030">T</text>
<path d="M12 311l7-5" stroke="#222"/><circle cx="11" cy="312" r="2" fill="none" stroke="#222"/><circle cx="20" cy="305" r="2" fill="none" stroke="#222"/>
<path d="M14 331h9" stroke="#a0f0a0" stroke-width="1.300"/><circle cx="12.500" cy="331" r="2" fill="none" stroke="#a0f0a0"/>
<path d="M14 354h9" stroke="#50c050" stroke-width="1.300"/><circle cx="12.500" cy="354" r="2" fill="none" stroke="#50c050"/>
<path d="M14 376h9" stroke="#108010" stroke-width="1.300"/><circle cx="12.500" cy="376" r="2" fill="none" stroke="#108010"/>
<path d="M14 398h9" stroke="#e02020" stroke-width="1.300"/><circle cx="12.500" cy="398" r="2" fill="none" stroke="#e02020"/>
<path d="M6 421l13-9 5 5-13 9z" fill="#b4c4cc" stroke="#666"/>
<rect x="6" y="434" width="17" height="14" fill="#b0c4b8" opacity=".7"/><path d="M6 445l4-5 4 3 4-6 5 3" stroke="#7080c0" fill="none"/>
<ellipse cx="14" cy="463" rx="7" ry="5" fill="#b8a8a8" stroke="#e02020"/><use href="#ell" x="14" y="463"/>
<ellipse cx="14" cy="485" rx="7" ry="5" fill="#b0a090" stroke="#a06020"/><use href="#ell" x="14" y="485"/>
<ellipse cx="14" cy="507" rx="7" ry="5" fill="#88aa88" stroke="#108010"/><use href="#ell" x="14" y="507"/>
<ellipse cx="14" cy="529" rx="7" ry="5" fill="#b0e8b0" stroke="#20e020"/><use href="#ell" x="14" y="529"/>
<path d="M6 559l17-16" stroke="#111"/><path d="M6 582l17-17" stroke="#40b040" stroke-width="1.500"/><path d="M6 605l17-18" stroke="#f02020" stroke-width="1.500"/>
<path d="M6 618.500h17" stroke="#111"/><path d="M6 640.500h17" stroke="#f09080" stroke-width="1.500"/><path d="M6 662.500h17" stroke="#20e020" stroke-width="1.500"/><path d="M6 684.500h17" stroke="#108010" stroke-width="1.500"/><path d="M6 706.500h17" stroke="#f02020" stroke-width="1.500"/><path d="M6 728.500h17" stroke="#6090ff" stroke-width="1.500"/><path d="M6 750.500h17" stroke="#0000a0" stroke-width="1.500"/>
<path d="M14.500 763v17" stroke="#111"/>
<path d="M7 798l8-12M7 798h15" stroke="#e06050" fill="none"/><path d="M14 790h6" stroke="#1040e0"/><text x="17" y="796" style="font-size:7px;fill:#1040e0">α</text>
<circle cx="14" cy="815" r="6" fill="none" stroke="#e08040" stroke-width="1.300"/><path d="M11 815h6M14 812v6" stroke="#1040e0"/>
<path d="M6 846l4-10 3 6 4-9 3 8" stroke="#1040e0" fill="none"/><text x="16" y="834" style="font-size:6px;fill:#1040e0">5</text>
<path d="M8 866l7-9 3 7" stroke="#1040e0" fill="none"/><text x="16" y="857" style="font-size:7px;fill:#1040e0">b</text><text x="16" y="869" style="font-size:7px;fill:#1040e0">c</text>
<path d="M7 882l4 5 11-13-2 10-7 7z" fill="#30b030" stroke="#208020" stroke-width=".5"/>
<path d="M7 899h4v11H7zM12 899l3-6 2 1-1 4h6l-2 12h-8z" fill="#50b040" stroke="#308030" stroke-width=".6"/>
<path d="M8 920l5 5 5-5 3 3-5 4 5 5-3 3-5-5-5 5-3-3 5-5-5-4z" fill="#f01818"/>
<rect x="1" y="945" width="26" height="10" fill="#b4ccd8"/><path d="M11 949l3 2.500 3-2.500" stroke="#333" fill="none" stroke-width="1.300"/>
<circle cx="10" cy="964" r="3.500" fill="#30b030"/><rect x="10" y="966" width="9" height="10" fill="#eee" stroke="#555" stroke-width=".7"/><path d="M14 975l3 4 4-3" stroke="#333" fill="none"/>
<path d="M10 997h1.500M13.500 997h1.500M17 997h1.500" stroke="#222" stroke-width="2"/><path d="M14 1002l3 2 3-2" stroke="#222" fill="none"/>

<!-- bottom toolbar -->
<rect x="0" y="1011" width="1916" height="21" fill="#9ab6c5"/>
<path d="M0 1010.500H1916" stroke="#6f8c9c"/><path d="M0 1031.500H1916" stroke="#6f8c9c"/>
<path d="M27.500 1011V1032" stroke="#7a98a8"/>
<path d="M8 1026l4-10 2 5 3-8 1 14" stroke="#a02020" fill="none"/><path d="M20 1014l-6 14-2 1 1-3 6-13z" fill="#e8c840"/>
<path d="M44 1016l-7 5 7 5" stroke="#eef3f5" fill="none" stroke-width="1.800"/><circle cx="44" cy="1016" r="2" fill="#eef3f5"/><circle cx="37" cy="1021" r="2" fill="#eef3f5"/><circle cx="44" cy="1026" r="2" fill="#eef3f5"/>
<rect x="54" y="1015" width="11" height="10" rx="2" fill="#d8e8f0" stroke="#7090c0"/><rect x="57" y="1018" width="10" height="9" rx="2" fill="#3080e0"/><path d="M59 1022h6" stroke="#fff" stroke-dasharray="1 1"/>
<rect x="76" y="1015" width="9" height="13" fill="#f0f0f0" stroke="#555"/><path d="M78 1019h5" stroke="#d02020" stroke-width="1.300"/><path d="M78 1022h5" stroke="#20a020" stroke-width="1.300"/><path d="M78 1025h5" stroke="#555"/>
<path d="M94 1017h12M94 1021h12M94 1025h12" stroke="#30b030" stroke-width="2.500"/><path d="M100 1014v14" stroke="#d03020" stroke-width="2"/>
<rect x="115" y="1013" width="10" height="9" fill="#dde8f0" stroke="#3060b0"/><rect x="120" y="1018" width="9" height="9" fill="#f0f8ff" stroke="#3060b0"/><path d="M121 1025l2-3 2 1 2-3" stroke="#20a040" fill="none"/>
<text x="135" y="1026" style="font-size:12px;fill:#5a7484">«</text>
<rect x="147.500" y="1015.500" width="12" height="12" fill="#c5dee8" stroke="#6b8696"/><path d="M155 1019l-3 2.500 3 2.500" stroke="#222" fill="none" stroke-width="1.300"/>
<rect x="159.500" y="1015.500" width="1591" height="12" fill="#9ab6c5" stroke="#7895a5"/>
<rect x="1576.500" y="1015.500" width="174" height="12" fill="#bcd6e2" stroke="#7895a5"/>
<rect x="1751.500" y="1015.500" width="12" height="12" fill="#c5dee8" stroke="#6b8696"/><path d="M1756 1019l3 2.500-3 2.500" stroke="#222" fill="none" stroke-width="1.300"/>
<path d="M1773 1019c4-4 11-3 11 4 0 3-2 4-3 5" stroke="#2060d0" fill="none" stroke-width="2"/><path d="M1771 1015v7h7z" fill="#2060d0"/>
<path d="M1807 1019c-4-4-11-3-11 4 0 3 2 4 3 5" stroke="#8ab0dc" fill="none" stroke-width="2"/><path d="M1809 1015v7h-7z" fill="#8ab0dc"/>
<path d="M1817 1026l4-4 3 3-4 4z" fill="#e03030"/><path d="M1821 1019l5-5 3 3-5 5z" fill="#30b040"/><path d="M1816 1019h10v10" stroke="#222" fill="none"/>
<circle cx="1845" cy="1019" r="4.500" fill="#fff" stroke="#222" stroke-width="1.500"/><path d="M1848 1023l5 5" stroke="#222" stroke-width="2.200"/><path d="M1838 1029h7M1838 1027v4M1834 1026v-9M1852 1015v6" stroke="#1040e0"/>
<circle cx="1865" cy="1019" r="4.500" fill="#fff" stroke="#222" stroke-width="1.500"/><path d="M1868 1023l5 5" stroke="#222" stroke-width="2.200"/><path d="M1862.500 1019h5" stroke="#1040e0" stroke-width="1.300"/>
<circle cx="1887" cy="1019" r="4.500" fill="#fff" stroke="#222" stroke-width="1.500"/><path d="M1890 1023l5 5" stroke="#222" stroke-width="2.200"/><path d="M1884.500 1019h5M1887 1016.500v5" stroke="#1040e0" stroke-width="1.300"/>
<path d="M1902 1016h14" stroke="#eef3f5" stroke-width="2.500" stroke-dasharray="1.500 1"/><path d="M1908 1019v7M1905 1024l3 4 3-4" stroke="#2060d0" fill="none" stroke-width="1.500"/>
</svg>
</body></html>
